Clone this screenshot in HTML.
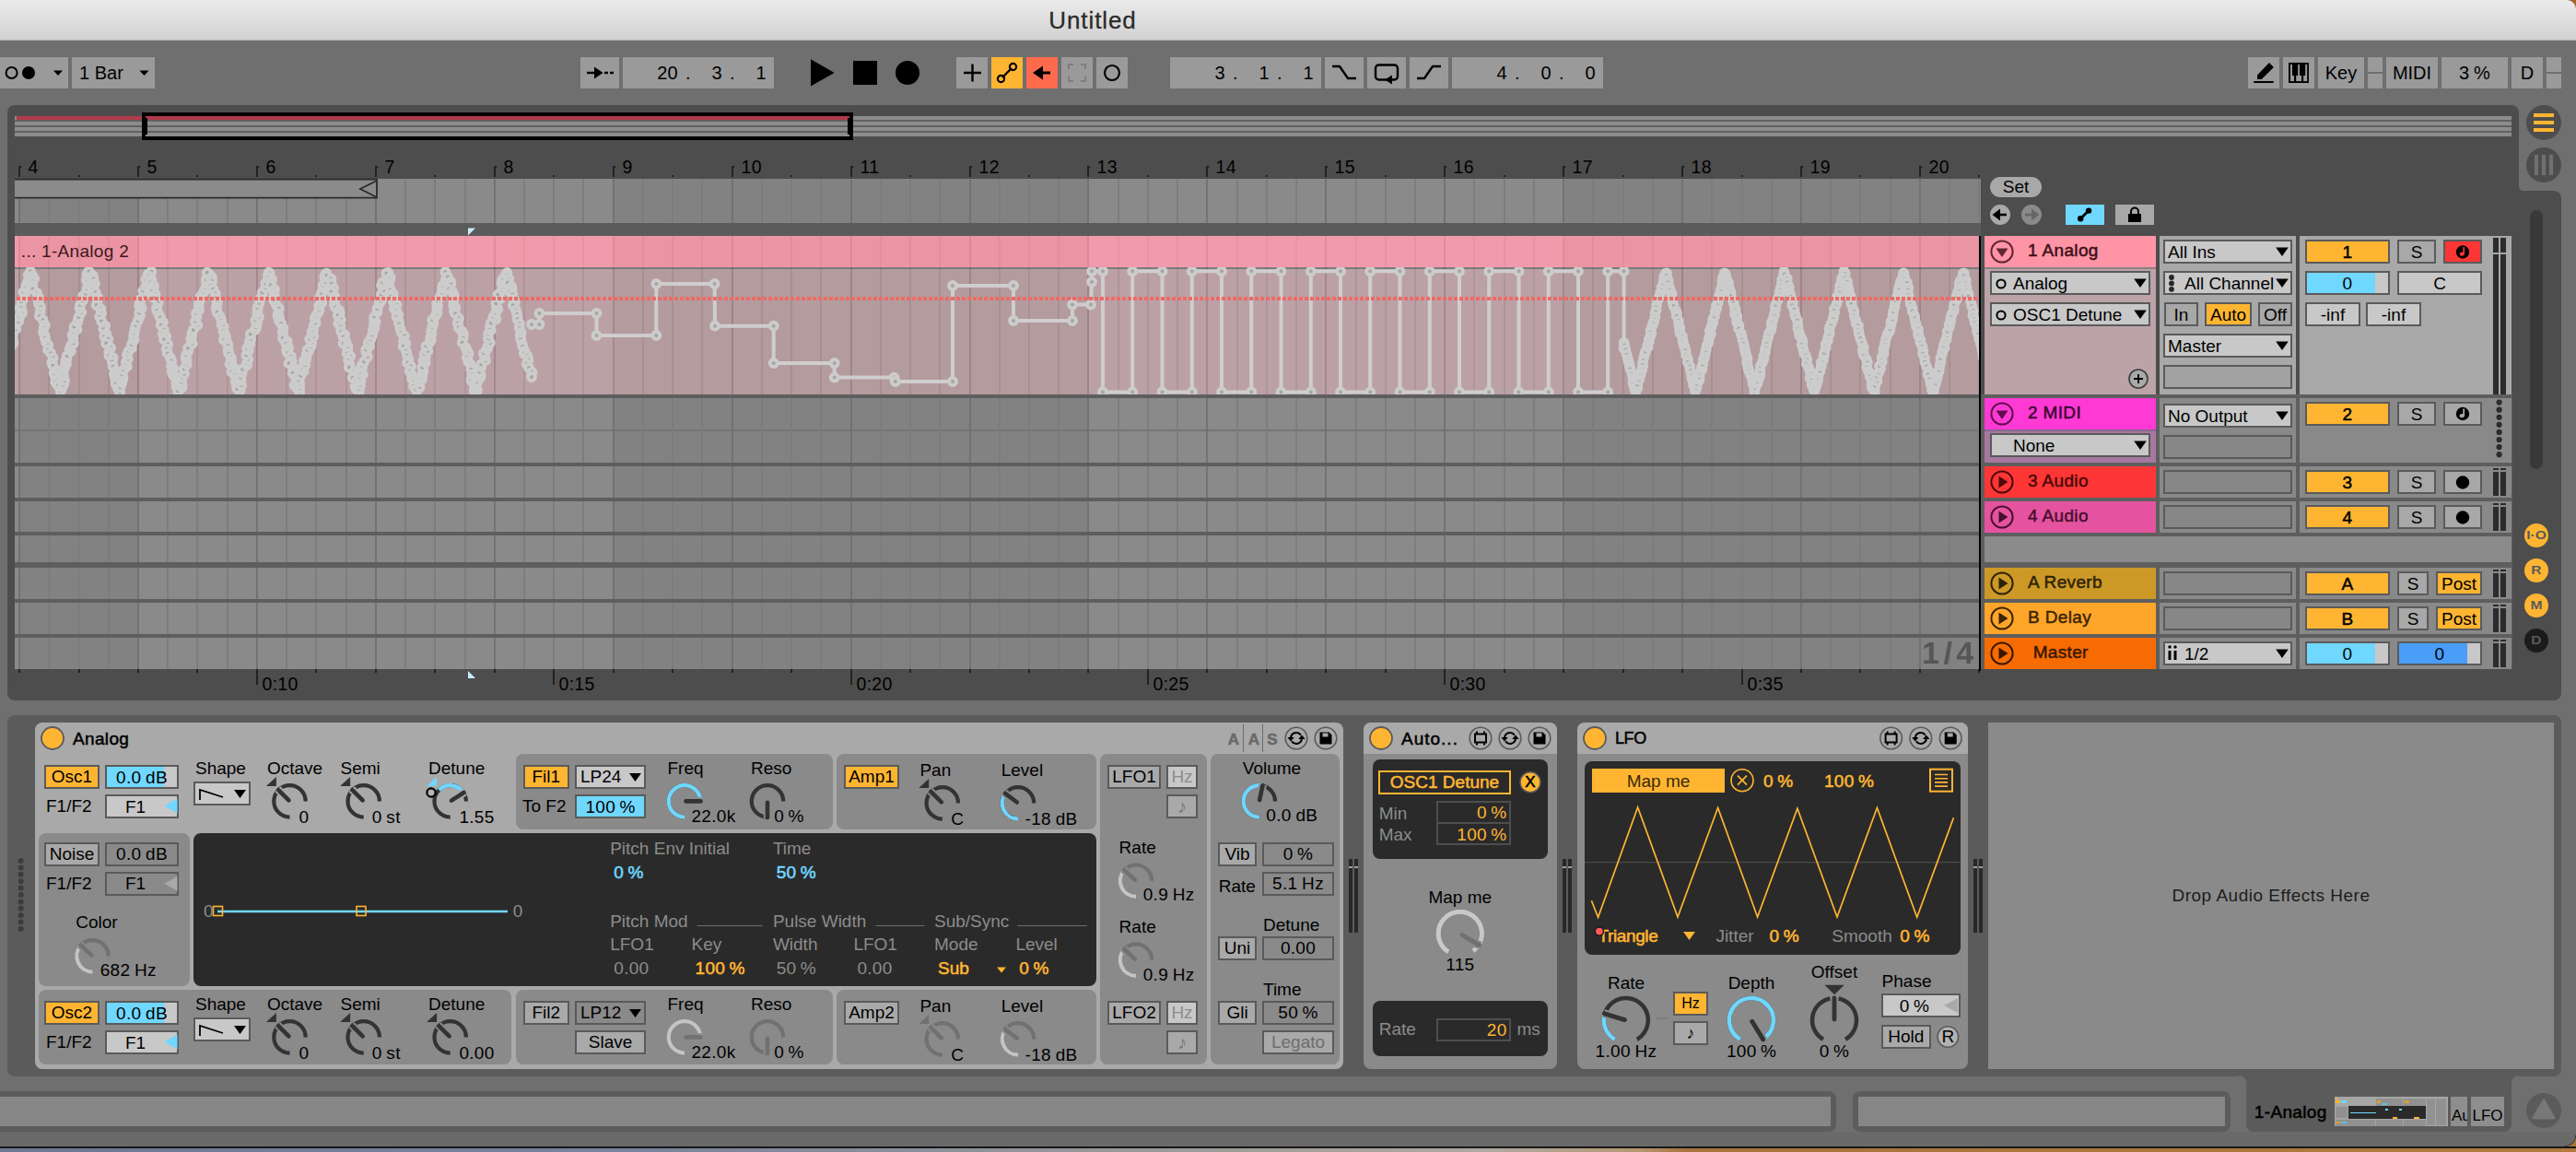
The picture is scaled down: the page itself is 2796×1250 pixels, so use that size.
<!DOCTYPE html>
<html><head><meta charset="utf-8"><title>Untitled</title>
<style>
html,body{margin:0;padding:0;}
body{width:2796px;height:1250px;overflow:hidden;background:#6f6f6f;font-family:"Liberation Sans", sans-serif;position:relative;}
.a{position:absolute;box-sizing:content-box;}
.t{white-space:nowrap;overflow:visible;}
svg{overflow:visible;pointer-events:none;}
svg text{font-family:"Liberation Sans", sans-serif;}
</style></head><body>
<div class="a" style="left:2780px;top:0px;width:16px;height:16px;background:#a1692e;"></div>
<div class="a" style="left:0px;top:0px;width:2796px;height:44px;background:linear-gradient(#ebebeb,#d1d1d1);border-bottom:1px solid #b4b4b4;height:43px;border-top-right-radius:10px;"></div>
<div class="a" style="left:0px;top:62px;width:74px;height:34px;background:#9a9a9a;"></div>
<div class="a" style="left:78px;top:62px;width:90px;height:34px;background:#9a9a9a;"></div>
<div class="a" style="left:630px;top:62px;width:42px;height:34px;background:#9a9a9a;"></div>
<div class="a" style="left:676px;top:62px;width:164px;height:34px;background:#9a9a9a;"></div>
<div class="a" style="left:1038px;top:62px;width:34px;height:34px;background:#9a9a9a;"></div>
<div class="a" style="left:1076px;top:62px;width:34px;height:34px;background:#ffb532;"></div>
<div class="a" style="left:1114px;top:62px;width:34px;height:34px;background:#ff6a4d;"></div>
<div class="a" style="left:1152px;top:62px;width:34px;height:34px;background:#9a9a9a;"></div>
<div class="a" style="left:1190px;top:62px;width:34px;height:34px;background:#9a9a9a;"></div>
<div class="a" style="left:1270px;top:62px;width:164px;height:34px;background:#9a9a9a;"></div>
<div class="a" style="left:1438px;top:62px;width:42px;height:34px;background:#9a9a9a;"></div>
<div class="a" style="left:1484px;top:62px;width:42px;height:34px;background:#9a9a9a;"></div>
<div class="a" style="left:1530px;top:62px;width:42px;height:34px;background:#9a9a9a;"></div>
<div class="a" style="left:1576px;top:62px;width:164px;height:34px;background:#9a9a9a;"></div>
<div class="a" style="left:2440px;top:62px;width:34px;height:34px;background:#9a9a9a;"></div>
<div class="a" style="left:2478px;top:62px;width:34px;height:34px;background:#9a9a9a;"></div>
<div class="a" style="left:2516px;top:62px;width:50px;height:34px;background:#9a9a9a;"></div>
<div class="a" style="left:2590px;top:62px;width:56px;height:34px;background:#9a9a9a;"></div>
<div class="a" style="left:2650px;top:62px;width:72px;height:34px;background:#9a9a9a;"></div>
<div class="a" style="left:2726px;top:62px;width:34px;height:34px;background:#9a9a9a;"></div>
<div class="a" style="left:2570px;top:62px;width:16px;height:16px;background:#9a9a9a;"></div>
<div class="a" style="left:2570px;top:80px;width:16px;height:16px;background:#9a9a9a;"></div>
<div class="a" style="left:2764px;top:62px;width:16px;height:16px;background:#9a9a9a;"></div>
<div class="a" style="left:2764px;top:80px;width:16px;height:16px;background:#9a9a9a;"></div>
<svg class="a" style="left:0;top:0" width="2796" height="1250" viewBox="0 0 2796 1250"><circle cx="12.6" cy="79" r="6" fill="none" stroke="#000" stroke-width="2"/><circle cx="31" cy="79" r="7" fill="#000"/><path d="M58 76.5h10l-5 5.5zM151.5 76.5h10l-5 5.5z" fill="#000"/><path d="M637 79h12" stroke="#000" stroke-width="2.4" fill="none"/><path d="M645 72.5l9.5 6.5l-9.5 6.5z" fill="#000"/><path d="M656 79h4M662 79h4" stroke="#000" stroke-width="2.4"/><path d="M880 64.2v29.4l25.6-14.7z" fill="#000"/><rect x="926" y="66" width="26" height="26" fill="#000"/><circle cx="985" cy="79" r="13" fill="#000"/><path d="M1046 79h19M1055.5 69.5v19" stroke="#000" stroke-width="2.4"/><path d="M1088 84l10-10" stroke="#000" stroke-width="2.4"/><circle cx="1086.5" cy="85.5" r="3.6" fill="none" stroke="#000" stroke-width="2.2"/><circle cx="1099.5" cy="72.5" r="3.6" fill="none" stroke="#000" stroke-width="2.2"/><path d="M1128 79h12" stroke="#000" stroke-width="3"/><path d="M1132 71.5v15l-11-7.5z" fill="#000"/><path d="M1160 75v-5h5M1173 70h5v5M1178 83v5h-5M1165 88h-5v-5" stroke="#7d7d7d" stroke-width="2" fill="none"/><circle cx="1207" cy="79" r="8" fill="none" stroke="#000" stroke-width="2.2"/><path d="M1446 72h8l9 13h9" stroke="#000" stroke-width="2.4" fill="none"/><path d="M1505 86.5h-8.5a3.5 3.5 0 0 1-3.5-3.5v-9a3.5 3.5 0 0 1 3.5-3.5h17a3.5 3.5 0 0 1 3.5 3.5v9a3.5 3.5 0 0 1-3.5 3.5h-3" stroke="#000" stroke-width="2.4" fill="none"/><path d="M1511 81.5v10l-8-5z" fill="#000"/><path d="M1538 85h8l9-13h9" stroke="#000" stroke-width="2.4" fill="none"/><path d="M2447 89h20" stroke="#000" stroke-width="1.9" stroke-linecap="round"/><path d="M2450 81.4v4.5h4.8l13.1-12.9l-4.9-4.9z" fill="#000"/><rect x="2484" y="68" width="22" height="22" fill="#000"/><g fill="#9a9a9a"><rect x="2486" y="70" width="2" height="12"/><rect x="2486" y="82" width="4" height="6.1"/><rect x="2494.2" y="70" width="1.8" height="12"/><rect x="2492.2" y="82" width="5.8" height="6.1"/><rect x="2502.2" y="70" width="2" height="12"/><rect x="2500.2" y="82" width="4" height="6.1"/></g></svg>
<div class="a t" style="left:1086px;top:0px;width:200px;height:44px;line-height:44px;font-size:26px;color:#2b2b2b;text-align:center;letter-spacing:0.9px;-webkit-text-stroke:0.3px;">Untitled</div>
<div class="a t" style="left:86px;top:62px;width:70px;height:34px;line-height:34px;font-size:20px;color:#000;">1 Bar</div>
<div class="a t" style="left:2516px;top:62px;width:50px;height:34px;line-height:34px;font-size:20px;color:#000;text-align:center;">Key</div>
<div class="a t" style="left:2590px;top:62px;width:56px;height:34px;line-height:34px;font-size:20px;color:#000;text-align:center;">MIDI</div>
<div class="a t" style="left:2650px;top:62px;width:72px;height:34px;line-height:34px;font-size:20px;color:#000;text-align:center;letter-spacing:0.3px;word-spacing:-1.2px;">3 %</div>
<div class="a t" style="left:2726px;top:62px;width:34px;height:34px;line-height:34px;font-size:20px;color:#000;text-align:center;">D</div>
<div class="a t" style="left:676px;top:62px;width:60px;height:34px;line-height:34px;font-size:20px;color:#000;text-align:right;letter-spacing:0.3px;">20</div>
<div class="a t" style="left:736px;top:62px;width:22px;height:34px;line-height:34px;font-size:20px;color:#000;text-align:center;letter-spacing:0.3px;">.</div>
<div class="a t" style="left:736px;top:62px;width:48px;height:34px;line-height:34px;font-size:20px;color:#000;text-align:right;letter-spacing:0.3px;">3</div>
<div class="a t" style="left:784px;top:62px;width:22px;height:34px;line-height:34px;font-size:20px;color:#000;text-align:center;letter-spacing:0.3px;">.</div>
<div class="a t" style="left:784px;top:62px;width:48px;height:34px;line-height:34px;font-size:20px;color:#000;text-align:right;letter-spacing:0.3px;">1</div>
<div class="a t" style="left:1270px;top:62px;width:60px;height:34px;line-height:34px;font-size:20px;color:#000;text-align:right;letter-spacing:0.3px;">3</div>
<div class="a t" style="left:1330px;top:62px;width:22px;height:34px;line-height:34px;font-size:20px;color:#000;text-align:center;letter-spacing:0.3px;">.</div>
<div class="a t" style="left:1330px;top:62px;width:48px;height:34px;line-height:34px;font-size:20px;color:#000;text-align:right;letter-spacing:0.3px;">1</div>
<div class="a t" style="left:1378px;top:62px;width:22px;height:34px;line-height:34px;font-size:20px;color:#000;text-align:center;letter-spacing:0.3px;">.</div>
<div class="a t" style="left:1378px;top:62px;width:48px;height:34px;line-height:34px;font-size:20px;color:#000;text-align:right;letter-spacing:0.3px;">1</div>
<div class="a t" style="left:1576px;top:62px;width:60px;height:34px;line-height:34px;font-size:20px;color:#000;text-align:right;letter-spacing:0.3px;">4</div>
<div class="a t" style="left:1636px;top:62px;width:22px;height:34px;line-height:34px;font-size:20px;color:#000;text-align:center;letter-spacing:0.3px;">.</div>
<div class="a t" style="left:1636px;top:62px;width:48px;height:34px;line-height:34px;font-size:20px;color:#000;text-align:right;letter-spacing:0.3px;">0</div>
<div class="a t" style="left:1684px;top:62px;width:22px;height:34px;line-height:34px;font-size:20px;color:#000;text-align:center;letter-spacing:0.3px;">.</div>
<div class="a t" style="left:1684px;top:62px;width:48px;height:34px;line-height:34px;font-size:20px;color:#000;text-align:right;letter-spacing:0.3px;">0</div>
<div class="a" style="left:8px;top:114px;width:2726px;height:120px;background:#4d4d4d;border-radius:8px 8px 0 0;"></div>
<div class="a" style="left:8px;top:207px;width:2772px;height:553px;background:#4d4d4d;border-radius:0 8px 8px 8px;"></div>
<div class="a" style="left:2734px;top:202px;width:5px;height:5px;background:radial-gradient(circle at 100% 0,#6f6f6f 4.5px,#4d4d4d 5.5px);"></div>
<div class="a" style="left:2742px;top:114px;width:38px;height:38px;background:#4d4d4d;border-radius:50%;"></div>
<div class="a" style="left:2742px;top:160px;width:38px;height:38px;background:#4d4d4d;border-radius:50%;"></div>
<svg class="a" style="left:0;top:0" width="2796" height="1250" viewBox="0 0 2796 1250"><path d="M2750 125h22M2750 133h22M2750 141h22" stroke="#ffb532" stroke-width="4.2"/><path d="M2753 168v22M2761 168v22M2769 168v22" stroke="#707070" stroke-width="4.2"/></svg>
<div class="a" style="left:16px;top:126px;width:2710px;height:4px;background:#8c8c8c;"></div>
<div class="a" style="left:16px;top:132px;width:2710px;height:4px;background:#8c8c8c;"></div>
<div class="a" style="left:16px;top:138px;width:2710px;height:4px;background:#8c8c8c;"></div>
<div class="a" style="left:16px;top:144px;width:2710px;height:4px;background:#8c8c8c;"></div>
<div class="a" style="left:16px;top:130px;width:2710px;height:2px;background:#616161;"></div>
<div class="a" style="left:16px;top:136px;width:2710px;height:2px;background:#616161;"></div>
<div class="a" style="left:16px;top:142px;width:2710px;height:2px;background:#616161;"></div>
<div class="a" style="left:18px;top:126px;width:904px;height:4px;background:#b13a4a;"></div>
<div class="a" style="left:154px;top:122px;width:764px;height:22px;background:transparent;border:4px solid #000;"></div>
<div class="a" style="left:158px;top:128px;width:2px;height:18px;background:#000;"></div>
<div class="a" style="left:920px;top:128px;width:2px;height:18px;background:#000;"></div>
<div class="a" style="left:16px;top:242px;width:2134px;height:14px;background:#5b5b5b;"></div>
<div class="a" style="left:16px;top:428px;width:2711px;height:298px;background:#5e5e5e;"></div>
<div class="a" style="left:16px;top:194px;width:2134px;height:48px;background:#8a8a8a;"></div>
<div class="a" style="left:21px;top:194px;width:130px;height:48px;background:#828282;"></div>
<div class="a" style="left:667px;top:194px;width:515px;height:48px;background:#828282;"></div>
<div class="a" style="left:1698px;top:194px;width:452px;height:48px;background:#828282;"></div>
<div class="a" style="left:16px;top:432px;width:2134px;height:70px;background:#8a8a8a;"></div>
<div class="a" style="left:21px;top:432px;width:130px;height:70px;background:#828282;"></div>
<div class="a" style="left:667px;top:432px;width:515px;height:70px;background:#828282;"></div>
<div class="a" style="left:1698px;top:432px;width:452px;height:70px;background:#828282;"></div>
<div class="a" style="left:16px;top:506px;width:2134px;height:34px;background:#8a8a8a;"></div>
<div class="a" style="left:21px;top:506px;width:130px;height:34px;background:#828282;"></div>
<div class="a" style="left:667px;top:506px;width:515px;height:34px;background:#828282;"></div>
<div class="a" style="left:1698px;top:506px;width:452px;height:34px;background:#828282;"></div>
<div class="a" style="left:16px;top:544px;width:2134px;height:33px;background:#8a8a8a;"></div>
<div class="a" style="left:21px;top:544px;width:130px;height:33px;background:#828282;"></div>
<div class="a" style="left:667px;top:544px;width:515px;height:33px;background:#828282;"></div>
<div class="a" style="left:1698px;top:544px;width:452px;height:33px;background:#828282;"></div>
<div class="a" style="left:16px;top:581px;width:2134px;height:29px;background:#8a8a8a;"></div>
<div class="a" style="left:21px;top:581px;width:130px;height:29px;background:#828282;"></div>
<div class="a" style="left:667px;top:581px;width:515px;height:29px;background:#828282;"></div>
<div class="a" style="left:1698px;top:581px;width:452px;height:29px;background:#828282;"></div>
<div class="a" style="left:16px;top:616px;width:2134px;height:34px;background:#8a8a8a;"></div>
<div class="a" style="left:21px;top:616px;width:130px;height:34px;background:#828282;"></div>
<div class="a" style="left:667px;top:616px;width:515px;height:34px;background:#828282;"></div>
<div class="a" style="left:1698px;top:616px;width:452px;height:34px;background:#828282;"></div>
<div class="a" style="left:16px;top:654px;width:2134px;height:34px;background:#8a8a8a;"></div>
<div class="a" style="left:21px;top:654px;width:130px;height:34px;background:#828282;"></div>
<div class="a" style="left:667px;top:654px;width:515px;height:34px;background:#828282;"></div>
<div class="a" style="left:1698px;top:654px;width:452px;height:34px;background:#828282;"></div>
<div class="a" style="left:16px;top:692px;width:2134px;height:34px;background:#8a8a8a;"></div>
<div class="a" style="left:21px;top:692px;width:130px;height:34px;background:#828282;"></div>
<div class="a" style="left:667px;top:692px;width:515px;height:34px;background:#828282;"></div>
<div class="a" style="left:1698px;top:692px;width:452px;height:34px;background:#828282;"></div>
<div class="a" style="left:16px;top:256px;width:2134px;height:34px;background:#f09aab;"></div>
<div class="a" style="left:21px;top:256px;width:130px;height:34px;background:#eb94a4;"></div>
<div class="a" style="left:667px;top:256px;width:515px;height:34px;background:#eb94a4;"></div>
<div class="a" style="left:1698px;top:256px;width:452px;height:34px;background:#eb94a4;"></div>
<div class="a" style="left:16px;top:290px;width:2134px;height:138px;background:#bba1a5;"></div>
<div class="a" style="left:21px;top:290px;width:130px;height:138px;background:#b39b9e;"></div>
<div class="a" style="left:667px;top:290px;width:515px;height:138px;background:#b39b9e;"></div>
<div class="a" style="left:1698px;top:290px;width:452px;height:138px;background:#b39b9e;"></div>
<div class="a" style="left:16px;top:290px;width:2134px;height:2px;background:#7a7c7c;"></div>
<div class="a" style="left:16px;top:466px;width:2134px;height:1.6px;background:#757575;"></div>
<svg class="a" style="left:0;top:0" width="2796" height="1250" viewBox="0 0 2796 1250"><path d="M21 194V242M150 194V242M279 194V242M408 194V242M537 194V242M666 194V242M795 194V242M924 194V242M1053 194V242M1181 194V242M1310 194V242M1439 194V242M1568 194V242M1697 194V242M1826 194V242M1955 194V242M2084 194V242" stroke="#707070" stroke-width="1.8"/><path d="M53 194V242M86 194V242M118 194V242M182 194V242M214 194V242M247 194V242M311 194V242M343 194V242M376 194V242M440 194V242M472 194V242M505 194V242M569 194V242M601 194V242M633 194V242M698 194V242M730 194V242M762 194V242M827 194V242M859 194V242M891 194V242M956 194V242M988 194V242M1020 194V242M1085 194V242M1117 194V242M1149 194V242M1214 194V242M1246 194V242M1278 194V242M1343 194V242M1375 194V242M1407 194V242M1472 194V242M1504 194V242M1536 194V242M1600 194V242M1633 194V242M1665 194V242M1729 194V242M1762 194V242M1794 194V242M1858 194V242M1891 194V242M1923 194V242M1987 194V242M2019 194V242M2052 194V242M2116 194V242M2148 194V242" stroke="#7c7c7c" stroke-width="1.8"/><path d="M21 256V290M150 256V290M279 256V290M408 256V290M537 256V290M666 256V290M795 256V290M924 256V290M1053 256V290M1181 256V290M1310 256V290M1439 256V290M1568 256V290M1697 256V290M1826 256V290M1955 256V290M2084 256V290" stroke="rgba(90,30,45,.10)" stroke-width="2"/><path d="M53 256V290M86 256V290M118 256V290M182 256V290M214 256V290M247 256V290M311 256V290M343 256V290M376 256V290M440 256V290M472 256V290M505 256V290M569 256V290M601 256V290M633 256V290M698 256V290M730 256V290M762 256V290M827 256V290M859 256V290M891 256V290M956 256V290M988 256V290M1020 256V290M1085 256V290M1117 256V290M1149 256V290M1214 256V290M1246 256V290M1278 256V290M1343 256V290M1375 256V290M1407 256V290M1472 256V290M1504 256V290M1536 256V290M1600 256V290M1633 256V290M1665 256V290M1729 256V290M1762 256V290M1794 256V290M1858 256V290M1891 256V290M1923 256V290M1987 256V290M2019 256V290M2052 256V290M2116 256V290M2148 256V290" stroke="rgba(90,30,45,.05)" stroke-width="2"/><path d="M21 290V428M150 290V428M279 290V428M408 290V428M537 290V428M666 290V428M795 290V428M924 290V428M1053 290V428M1181 290V428M1310 290V428M1439 290V428M1568 290V428M1697 290V428M1826 290V428M1955 290V428M2084 290V428" stroke="rgba(60,20,30,.17)" stroke-width="2"/><path d="M53 290V428M86 290V428M118 290V428M182 290V428M214 290V428M247 290V428M311 290V428M343 290V428M376 290V428M440 290V428M472 290V428M505 290V428M569 290V428M601 290V428M633 290V428M698 290V428M730 290V428M762 290V428M827 290V428M859 290V428M891 290V428M956 290V428M988 290V428M1020 290V428M1085 290V428M1117 290V428M1149 290V428M1214 290V428M1246 290V428M1278 290V428M1343 290V428M1375 290V428M1407 290V428M1472 290V428M1504 290V428M1536 290V428M1600 290V428M1633 290V428M1665 290V428M1729 290V428M1762 290V428M1794 290V428M1858 290V428M1891 290V428M1923 290V428M1987 290V428M2019 290V428M2052 290V428M2116 290V428M2148 290V428" stroke="rgba(60,20,30,.09)" stroke-width="2"/><path d="M21 432V502M150 432V502M279 432V502M408 432V502M537 432V502M666 432V502M795 432V502M924 432V502M1053 432V502M1181 432V502M1310 432V502M1439 432V502M1568 432V502M1697 432V502M1826 432V502M1955 432V502M2084 432V502" stroke="#707070" stroke-width="1.8"/><path d="M53 432V502M86 432V502M118 432V502M182 432V502M214 432V502M247 432V502M311 432V502M343 432V502M376 432V502M440 432V502M472 432V502M505 432V502M569 432V502M601 432V502M633 432V502M698 432V502M730 432V502M762 432V502M827 432V502M859 432V502M891 432V502M956 432V502M988 432V502M1020 432V502M1085 432V502M1117 432V502M1149 432V502M1214 432V502M1246 432V502M1278 432V502M1343 432V502M1375 432V502M1407 432V502M1472 432V502M1504 432V502M1536 432V502M1600 432V502M1633 432V502M1665 432V502M1729 432V502M1762 432V502M1794 432V502M1858 432V502M1891 432V502M1923 432V502M1987 432V502M2019 432V502M2052 432V502M2116 432V502M2148 432V502" stroke="#7c7c7c" stroke-width="1.8"/><path d="M21 506V540M150 506V540M279 506V540M408 506V540M537 506V540M666 506V540M795 506V540M924 506V540M1053 506V540M1181 506V540M1310 506V540M1439 506V540M1568 506V540M1697 506V540M1826 506V540M1955 506V540M2084 506V540" stroke="#707070" stroke-width="1.8"/><path d="M53 506V540M86 506V540M118 506V540M182 506V540M214 506V540M247 506V540M311 506V540M343 506V540M376 506V540M440 506V540M472 506V540M505 506V540M569 506V540M601 506V540M633 506V540M698 506V540M730 506V540M762 506V540M827 506V540M859 506V540M891 506V540M956 506V540M988 506V540M1020 506V540M1085 506V540M1117 506V540M1149 506V540M1214 506V540M1246 506V540M1278 506V540M1343 506V540M1375 506V540M1407 506V540M1472 506V540M1504 506V540M1536 506V540M1600 506V540M1633 506V540M1665 506V540M1729 506V540M1762 506V540M1794 506V540M1858 506V540M1891 506V540M1923 506V540M1987 506V540M2019 506V540M2052 506V540M2116 506V540M2148 506V540" stroke="#7c7c7c" stroke-width="1.8"/><path d="M21 544V577M150 544V577M279 544V577M408 544V577M537 544V577M666 544V577M795 544V577M924 544V577M1053 544V577M1181 544V577M1310 544V577M1439 544V577M1568 544V577M1697 544V577M1826 544V577M1955 544V577M2084 544V577" stroke="#707070" stroke-width="1.8"/><path d="M53 544V577M86 544V577M118 544V577M182 544V577M214 544V577M247 544V577M311 544V577M343 544V577M376 544V577M440 544V577M472 544V577M505 544V577M569 544V577M601 544V577M633 544V577M698 544V577M730 544V577M762 544V577M827 544V577M859 544V577M891 544V577M956 544V577M988 544V577M1020 544V577M1085 544V577M1117 544V577M1149 544V577M1214 544V577M1246 544V577M1278 544V577M1343 544V577M1375 544V577M1407 544V577M1472 544V577M1504 544V577M1536 544V577M1600 544V577M1633 544V577M1665 544V577M1729 544V577M1762 544V577M1794 544V577M1858 544V577M1891 544V577M1923 544V577M1987 544V577M2019 544V577M2052 544V577M2116 544V577M2148 544V577" stroke="#7c7c7c" stroke-width="1.8"/><path d="M21 581V610M150 581V610M279 581V610M408 581V610M537 581V610M666 581V610M795 581V610M924 581V610M1053 581V610M1181 581V610M1310 581V610M1439 581V610M1568 581V610M1697 581V610M1826 581V610M1955 581V610M2084 581V610" stroke="#707070" stroke-width="1.8"/><path d="M53 581V610M86 581V610M118 581V610M182 581V610M214 581V610M247 581V610M311 581V610M343 581V610M376 581V610M440 581V610M472 581V610M505 581V610M569 581V610M601 581V610M633 581V610M698 581V610M730 581V610M762 581V610M827 581V610M859 581V610M891 581V610M956 581V610M988 581V610M1020 581V610M1085 581V610M1117 581V610M1149 581V610M1214 581V610M1246 581V610M1278 581V610M1343 581V610M1375 581V610M1407 581V610M1472 581V610M1504 581V610M1536 581V610M1600 581V610M1633 581V610M1665 581V610M1729 581V610M1762 581V610M1794 581V610M1858 581V610M1891 581V610M1923 581V610M1987 581V610M2019 581V610M2052 581V610M2116 581V610M2148 581V610" stroke="#7c7c7c" stroke-width="1.8"/><path d="M21 616V650M150 616V650M279 616V650M408 616V650M537 616V650M666 616V650M795 616V650M924 616V650M1053 616V650M1181 616V650M1310 616V650M1439 616V650M1568 616V650M1697 616V650M1826 616V650M1955 616V650M2084 616V650" stroke="#707070" stroke-width="1.8"/><path d="M53 616V650M86 616V650M118 616V650M182 616V650M214 616V650M247 616V650M311 616V650M343 616V650M376 616V650M440 616V650M472 616V650M505 616V650M569 616V650M601 616V650M633 616V650M698 616V650M730 616V650M762 616V650M827 616V650M859 616V650M891 616V650M956 616V650M988 616V650M1020 616V650M1085 616V650M1117 616V650M1149 616V650M1214 616V650M1246 616V650M1278 616V650M1343 616V650M1375 616V650M1407 616V650M1472 616V650M1504 616V650M1536 616V650M1600 616V650M1633 616V650M1665 616V650M1729 616V650M1762 616V650M1794 616V650M1858 616V650M1891 616V650M1923 616V650M1987 616V650M2019 616V650M2052 616V650M2116 616V650M2148 616V650" stroke="#7c7c7c" stroke-width="1.8"/><path d="M21 654V688M150 654V688M279 654V688M408 654V688M537 654V688M666 654V688M795 654V688M924 654V688M1053 654V688M1181 654V688M1310 654V688M1439 654V688M1568 654V688M1697 654V688M1826 654V688M1955 654V688M2084 654V688" stroke="#707070" stroke-width="1.8"/><path d="M53 654V688M86 654V688M118 654V688M182 654V688M214 654V688M247 654V688M311 654V688M343 654V688M376 654V688M440 654V688M472 654V688M505 654V688M569 654V688M601 654V688M633 654V688M698 654V688M730 654V688M762 654V688M827 654V688M859 654V688M891 654V688M956 654V688M988 654V688M1020 654V688M1085 654V688M1117 654V688M1149 654V688M1214 654V688M1246 654V688M1278 654V688M1343 654V688M1375 654V688M1407 654V688M1472 654V688M1504 654V688M1536 654V688M1600 654V688M1633 654V688M1665 654V688M1729 654V688M1762 654V688M1794 654V688M1858 654V688M1891 654V688M1923 654V688M1987 654V688M2019 654V688M2052 654V688M2116 654V688M2148 654V688" stroke="#7c7c7c" stroke-width="1.8"/><path d="M21 692V726M150 692V726M279 692V726M408 692V726M537 692V726M666 692V726M795 692V726M924 692V726M1053 692V726M1181 692V726M1310 692V726M1439 692V726M1568 692V726M1697 692V726M1826 692V726M1955 692V726M2084 692V726" stroke="#707070" stroke-width="1.8"/><path d="M53 692V726M86 692V726M118 692V726M182 692V726M214 692V726M247 692V726M311 692V726M343 692V726M376 692V726M440 692V726M472 692V726M505 692V726M569 692V726M601 692V726M633 692V726M698 692V726M730 692V726M762 692V726M827 692V726M859 692V726M891 692V726M956 692V726M988 692V726M1020 692V726M1085 692V726M1117 692V726M1149 692V726M1214 692V726M1246 692V726M1278 692V726M1343 692V726M1375 692V726M1407 692V726M1472 692V726M1504 692V726M1536 692V726M1600 692V726M1633 692V726M1665 692V726M1729 692V726M1762 692V726M1794 692V726M1858 692V726M1891 692V726M1923 692V726M1987 692V726M2019 692V726M2052 692V726M2116 692V726M2148 692V726" stroke="#7c7c7c" stroke-width="1.8"/><path d="M21 192V181h2.2M150 192V181h2.2M279 192V181h2.2M408 192V181h2.2M537 192V181h2.2M666 192V181h2.2M795 192V181h2.2M924 192V181h2.2M1053 192V181h2.2M1181 192V181h2.2M1310 192V181h2.2M1439 192V181h2.2M1568 192V181h2.2M1697 192V181h2.2M1826 192V181h2.2M1955 192V181h2.2M2084 192V181h2.2" stroke="#222" stroke-width="2" fill="none"/><path d="M86 190V192M214 190V192M343 190V192M472 190V192M601 190V192M730 190V192M859 190V192M988 190V192M1117 190V192M1246 190V192M1375 190V192M1504 190V192M1633 190V192M1762 190V192M1891 190V192M2019 190V192M2148 190V192" stroke="#222" stroke-width="2"/><path d="M21 726V730M86 726V730M150 726V730M214 726V730M343 726V730M408 726V730M472 726V730M537 726V730M666 726V730M730 726V730M795 726V730M859 726V730M988 726V730M1053 726V730M1117 726V730M1181 726V730M1310 726V730M1375 726V730M1439 726V730M1504 726V730M1633 726V730M1697 726V730M1762 726V730M1826 726V730M1955 726V730M2019 726V730M2084 726V730M2148 726V730" stroke="#222" stroke-width="2"/><path d="M279 726V743M601 726V743M924 726V743M1246 726V743M1568 726V743M1891 726V743" stroke="#222" stroke-width="2"/><path d="M16 194.7H409V214.7H16" fill="#8b8b8b" stroke="#2b2b2b" stroke-width="1.8"/><path d="M408 196.5L391 205L408 213.5" fill="none" stroke="#2b2b2b" stroke-width="1.8"/><path d="M508 247.5h8l-8 8z" fill="#c8ecff"/><path d="M508 728v8h8z" fill="#c8ecff"/></svg>
<svg class="a" style="left:0;top:0" width="2796" height="1250" viewBox="0 0 2796 1250"><defs><marker id="m" markerWidth="14" markerHeight="14" refX="7" refY="7" markerUnits="userSpaceOnUse"><circle cx="7" cy="7" r="3.95" fill="#a6a4a5" stroke="#cdcccc" stroke-width="3.9"/></marker><clipPath id="lc"><rect x="16" y="290" width="2134" height="138"/></clipPath></defs><g clip-path="url(#lc)" fill="none" stroke="#cfcdce" stroke-width="4" stroke-linejoin="round"><polyline points="12.2,375.7 14.4,372.9 14.5,370.3 13.1,366.9 14,363 15,359.4 17.3,356.8 17.1,351.9 20.2,348.9 21.2,343.7 23.9,340.1 24,337.7 21.5,334.4 22.9,331.8 23.5,326.9 26.6,322.8 27.1,319.4 25.4,316.8 29,313.9 28.2,310.3 29.9,306.1 32.2,302.9 30.8,298.4 33.1,294.3 35.3,299.3 37.2,302.5 35.3,305.2 35.2,309.8 35.6,313.6 40,318 41.6,322.1 41.5,325.4 42,329.5 44.1,333.3 43.7,338.5 42.9,342.9 46.7,347.3 48.8,352.7 47.6,355.9 47,360.3 48.6,364 48.8,366.7 50.2,371.4 52.2,374.5 52,379.5 55.1,383.2 57.6,388.2 56.3,393.2 57.5,396.8 61.5,401.9 58.6,404.6 59.6,407.7 62.2,411.5 60.3,414.6 62.9,418.2 66.5,422.3 65.6,424.3 67.4,420.1 69,417.6 70.1,412.9 69,408.1 68.6,404.5 69.4,400.3 70.7,397.7 72,394.9 71.1,392.4 72.2,389.7 72.7,386.2 76.7,381.2 75.7,378.4 77,375 79.9,372.3 79.5,367 78.7,363.2 80.5,360.5 83.5,357.4 80.5,354.6 84.1,349.3 84.9,346.6 85.4,344.2 88.2,338.8 86.6,334.4 87,330.9 89.8,326.2 90,321.5 93,318.5 94.5,313.1 95.5,308.3 93.9,303.7 95.5,299.8 94.6,297.4 96.4,294.4 100.7,298.8 101.5,302.5 102.9,307.9 100.4,311.3 101,314.3 103.7,317.3 106,322.4 106,326.2 104.6,331 109.5,335.3 109.9,340 108.2,343.8 110.1,348.6 114.2,353.4 112.4,356.9 115.2,362.1 113.2,365 117.4,367.8 115.1,372.6 120.1,377.4 118.3,381.8 118.3,385.8 122.7,388.2 121.8,392.5 122.6,397.7 125.6,402.7 123.7,405.6 124.5,408.9 125.6,413 125.9,416.6 128.1,421.7 130.1,425.5 130.6,420.4 132.3,415.3 133.3,411.3 133.5,409 132.2,406.1 134.2,401.3 137.7,397.5 136.8,393.5 138.8,389.6 137.9,384.8 139.6,380.8 142.8,377.6 142.8,373.7 145.5,369.1 145,365.4 145.5,361.5 146.4,357.1 147.4,353.1 149.7,347.9 152.1,342.9 151.1,339.7 153.7,334.5 151,331.8 151.7,328.1 152.5,325 156.8,320.7 155.2,315.6 158.6,311 160.3,308.3 158.6,303 160.7,297.7 164.3,294.7 161.7,299.6 164.3,303.2 163.6,306.6 166.9,309.9 166.7,312.3 165.1,315.9 168.7,319.3 167.1,323.2 171.7,328.5 169.9,333.8 170.4,337 172.6,341.7 174,344.4 177,349.5 174.7,352.7 177.9,357.8 176.8,362.3 180.2,364.8 178.2,368.4 182.1,373.6 180.8,378.4 181.9,383.4 184.9,388.3 186.2,391.7 186.1,396.9 188,399.6 186.8,402.6 187.3,405.5 189.2,408.4 192,411.7 191.6,414.9 191.6,417.7 191.8,420.1 194.6,422.5 193.1,424.5 197.4,420.7 197.5,418.1 196.9,414.4 197.7,409.6 200,405.7 199.7,400.3 202.6,395.4 202.3,391.2 201.5,387.8 202.2,385.1 204.2,380.5 204.1,377.6 208.9,372.7 207.3,368.3 208.1,365.3 208.4,361.5 209.8,357.9 214.4,352.6 212,348.6 213.6,343.3 213,339.9 216,336.4 215.7,332.5 215.8,328.6 216.9,325.5 217.6,321.9 219.4,319.6 221.4,316.5 223.2,312.6 224.1,308.2 223.8,303.2 227.4,299.9 226.8,297.1 224.8,295.8 229.9,300.7 230.2,304.9 228.6,309.8 231.3,313.7 233.9,318.6 234.1,323.5 235.8,328.5 234.8,333 234.9,335.4 235.6,338.8 238.9,343.7 240.3,348 240.7,352.4 242.7,354.7 242.5,359.3 244.2,363.3 245.2,365.8 242.9,368.9 246.7,372.1 247.4,375 247.6,380.3 248.4,383.8 250.8,388.3 251.3,392.5 249.6,395 253.1,398.1 253.1,401.4 251.4,403.7 255,406.9 256.1,411.3 256.1,414.6 256.8,418.3 259.5,421 260.6,423.9 257.4,421.9 262,418.1 261.6,412.8 261.3,409.7 262.6,404.5 263.3,400.4 268,396.4 268,393.7 269.3,389.8 267.4,385.3 269.8,380.2 268.2,377.8 271.2,374 270.6,370.8 272.2,367.4 271.9,362.5 276.9,357.8 278,355.2 279,350.6 277.4,347.4 281.1,343.9 279.2,339.8 279.7,336.1 279.5,333.7 281.5,328.8 282.7,323.6 284.6,320.4 284.7,317.5 288.4,312.3 288.4,307.4 291.1,302.3 291,298.3 291.7,295.8 292.7,296.5 291.6,300.8 295.2,303.2 293.7,306 293.8,309.3 298,313.9 297.3,317 297.7,320.3 296.7,323.8 297.6,326.6 300.2,331.7 302.8,334.7 302,340.1 301.5,342.9 302.9,345.5 303,348.1 305.3,351.2 307.4,356.2 306.7,359.8 307.5,363.8 306.9,367.1 311.8,370.3 310.4,373 313.1,377.3 311.1,380.2 312.4,383.3 315.9,387 316.7,391.9 313.4,394.3 318.5,398.8 318,402.6 317.7,404.9 321,410.1 322.9,415.1 319.6,418.1 322.2,420.9 325.2,425.4 325,421.1 325.3,416.4 324.4,412.4 326.4,407.7 329.6,402.5 328,399.3 331.1,396.2 329.8,391.7 332.3,389.2 332.7,385.1 334.4,382.1 333.6,379.7 337.5,376 338.2,371.7 336.2,367.9 340.3,364.8 338.4,360.3 339.9,357.9 340.6,353.5 342.5,350.4 341.7,345.3 342.8,342.8 345.3,339.2 346.5,336.3 346.3,331.7 349.2,328.7 349.3,325.5 347.3,322.4 348.8,317.8 351,312.5 350.5,309.6 353.4,306 352.3,300.8 353.5,297.3 354.4,296.7 354.7,299.1 359.4,302.7 359.9,307.7 362.1,313.1 359.5,316.4 363.4,321.7 363.6,324.1 363.1,327.5 363,330.9 364.1,333.2 368,336.6 368.7,339.3 366.6,342.3 370,347.1 367.3,350.8 369.7,354.5 370.2,359.7 374.2,363.1 372.6,365.5 375.4,370.4 372.7,372.8 377.3,375.3 377.3,378.4 376.7,383.5 380.3,386.7 378.1,390.9 379.5,395.4 378.9,398.6 384.2,403.2 385.4,407.5 382.7,409.9 386.9,413.7 385.6,418.9 386.6,422 389.8,425.1 389.9,422.3 391.2,417.7 391.3,413 390.8,409.6 393.8,406.2 391.7,403.6 393.1,399 392.7,396.5 395.1,392.5 398.9,387.1 397.4,381.8 397.3,379.2 401,375.3 399.8,371.6 402.4,368 404.1,363.6 404.9,358.7 406.4,356 405.9,352.8 407.6,349.3 406,346.4 406.4,343.3 409.5,338.3 409.5,335 411.4,329.6 413.5,326.5 415.4,322.2 413.7,319.6 416.5,314.7 414.1,309.6 415.3,306.4 419.9,303.5 420.7,299.4 421.3,295.9 419.4,296.4 423.7,301.1 422.8,303.8 422.1,308 422.6,311.4 423.8,314.4 426.7,318.6 424.4,321.5 428.3,324.8 427.3,327.7 430.3,330.7 427.9,334.7 430.1,337.3 432.2,341.3 430.6,343.9 432.9,348.4 433.2,351.6 434.5,356.8 435.7,360.9 438.9,364.5 437.9,369.9 440.3,372.8 437.7,375.7 440.9,380.8 442,385.7 443.5,390.7 442.2,393.5 446,397.6 444.7,402.7 447.1,406.9 447,410.8 449.5,414 448.9,419.1 453,423 451.5,422.7 455.6,420 454.8,414.7 457.5,412.2 458.2,408.7 458.9,404.5 459.4,401.7 458.4,398.7 461.6,393.7 459.5,390.8 461.7,387.3 460.8,383.8 464.3,380.7 462.4,375.6 466.7,371.6 467.7,369.1 467.2,366.5 468.3,362.5 468.2,359.2 469.2,355.1 470.4,350.7 469.3,347.1 472.5,342.8 474.5,339.8 474.3,335.1 475.1,332.2 474.1,329.6 474.9,325.9 477.7,322.2 478.9,319.8 479.9,317.2 480.1,312.5 480.7,310 483.6,306.5 483.8,303.8 484.6,298.4 483.3,295 486,300.4 489.2,305.6 489.3,308.5 487.3,313.6 491.3,317 492.6,319.8 493,323 492.2,325.8 492.2,330.9 494.3,334 493,337.4 494.2,340.2 497.9,345.4 496.8,350.5 497.7,355.3 501.1,359.2 503,362.6 502.7,366.7 501.7,371.7 505.4,377.1 507.1,380.6 508.7,383.7 506.9,387.8 508.4,392.5 510.5,395.4 511.4,397.8 511.4,400.9 512.4,406.3 512.2,410.7 511.5,413 514.9,415.8 515.3,419.4 514.8,424.5 517.9,423.5 515.5,421.1 516.9,417.7 518.2,414.3 520.9,410.2 521.8,407.2 520.5,403.4 522.3,398.2 522.3,395.5 526.9,391.2 525.9,386.4 524.9,383.3 528.5,379 529.7,375.6 531.9,371.9 529.9,367.3 530.2,362.2 532.8,358.3 532,355.2 532.9,350.5 538.2,346.5 535.5,343.7 537.9,339.6 540.4,335.3 538.8,332.4 538.4,329.2 543,324.1 540.5,319.6 545.1,314.7 546,310.9 544.6,307.2 545.2,304.5 546.3,302.1 549.1,297.5 550.4,296 550.4,299.2 552.4,302.8 551,306.8 555.3,311.1 555.6,314.1 553.3,316.4 556.3,319.5 557.6,324.7 559,328 556.9,331.3 560,336.5 561.2,340.9 561.6,346.3 563.9,351.2 563.9,356.1 565.6,360.7 564.8,363.9 565.2,368.2 566.8,373.3 567.2,375.7 569.6,380.9 568.8,383.6 572.4,386.1 573.5,390.4 571.7,394.9 574.1,399.1 577.4,403.9 577,409" marker-start="url(#m)" marker-mid="url(#m)" marker-end="url(#m)"/><polyline points="577,352 585.4,352 585.4,340 647.5,340 647.5,364 712.3,364 712.3,308 775.6,308 776,353.7 839.7,353.7 839.7,394 905.7,394 905.7,409.6 970.5,409.6 971.8,414 1034,414 1034,310 1100,310 1100,348 1164,348 1164,330.5 1184,330.5 1185,306 1185,294.3 1197,294.3 1197,425.5 1229.2,425.5 1229.2,294.3 1261.5,294.3 1261.5,425.5 1293.8,425.5 1293.8,294.3 1326,294.3 1326,425.5 1358.2,425.5 1358.2,294.3 1390.5,294.3 1390.5,425.5 1422.8,425.5 1422.8,294.3 1455,294.3 1455,425.5 1487.2,425.5 1487.2,294.3 1519.5,294.3 1519.5,425.5 1551.8,425.5 1551.8,294.3 1584,294.3 1584,425.5 1616.2,425.5 1616.2,294.3 1648.5,294.3 1648.5,425.5 1680.8,425.5 1680.8,294.3 1713,294.3 1713,425.5 1745.2,425.5 1745.2,294.3 1762.6,294.3 1762.6,378" marker-start="url(#m)" marker-mid="url(#m)" marker-end="url(#m)"/><polyline points="1762.6,372 1763.2,374.5 1764.4,379.5 1765.7,384.7 1767,389.9 1767.6,392.5 1768.4,395.5 1769,398.1 1769.6,400.6 1771.5,405.5 1772.5,409.8 1772.5,414 1772.8,416.7 1774.1,421.3 1775.4,424.6 1775.6,424 1777.3,420.8 1777.4,417.4 1779.1,412.1 1780.5,407.1 1780.7,404.7 1782.3,401.1 1783,397.7 1783,393.7 1784,388.7 1785.3,383.9 1786,381.6 1788.7,376.9 1788.3,374.6 1789.8,370.7 1789.9,367.8 1791.4,364.5 1792.4,361.3 1791.7,358.1 1793.4,353.7 1794.3,351 1795.3,348.5 1796.4,344 1796.5,339.7 1797.5,336.2 1798.1,331.1 1799.2,326.1 1800.4,323.1 1802.2,318 1803.8,314.5 1803.7,311.5 1805.3,307.5 1806.2,302.9 1806.4,299.5 1808.1,296.7 1809,296.3 1809.1,299.1 1810.5,303.8 1810.9,306.5 1811.7,311.6 1812.6,314.5 1814.7,318.9 1814.1,321.7 1815.2,324.8 1815.8,328.7 1816.7,332.1 1819.1,337.4 1820.2,340 1819.7,342.7 1821.8,348 1822.2,352.6 1823.3,355.5 1823.1,358.2 1823.6,361.7 1826,365.2 1826.5,369.7 1827.5,373.9 1828.5,376.7 1829.6,380.3 1830.2,385.4 1831.9,389.5 1831.7,393.1 1834.2,397.6 1835,402.3 1836.1,407.3 1836.7,411.6 1837.9,414.9 1838.1,417.5 1839.9,422.2 1840,424.5 1841.3,420.9 1842.2,416.7 1844.4,412.3 1844.5,409.4 1845.1,404.7 1847.3,400.9 1847,398.4 1848.2,395.6 1848.9,390.4 1849.7,387.8 1850.9,383.8 1851.7,379.9 1852.7,375 1854.4,371.4 1854.6,368.5 1855.7,364.9 1856.8,362.2 1855.8,358.8 1857.2,355.7 1857.8,353.3 1859.3,349.7 1859.2,346.3 1860.9,343.3 1861.8,338.1 1863.1,335.1 1862.8,331.6 1864.6,328.8 1865.5,324 1866.2,320.3 1867.8,317.3 1868,313.8 1869.5,309 1869.4,305.2 1870,301.2 1871.7,296.3 1872.7,297.2 1873.6,300.7 1874.3,304.3 1876,306.6 1875.8,309.8 1877.1,313.1 1878.3,316.7 1878.8,321 1881.1,326.2 1881.6,328.7 1882.8,333.8 1883.6,336.6 1883,340.8 1885.4,343.2 1885.1,347.5 1885.5,350.2 1887.5,353.2 1887.1,356.6 1889.7,361.7 1890.5,364.5 1891.4,368.7 1892.7,373.1 1893.7,377.9 1894.1,380.8 1895.2,384.7 1896.4,388.4 1896.1,392.4 1896.6,395.5 1897.4,399.3 1898.5,403.1 1900.2,406.9 1901.9,410.9 1902.4,413.2 1902.8,417 1904.4,421.3 1904.4,424.8 1905,420.9 1907.2,416.6 1907.7,414.2 1909.5,409.8 1910.4,406.5 1910.4,402.6 1910.7,397.5 1913,393 1914.3,389.6 1914.4,386.1 1915.9,382.2 1916,379.2 1917.1,375.6 1917.8,370.8 1919.2,365.9 1919.9,362 1922.3,358.1 1923,353.8 1922.8,350.5 1924.2,347.2 1925.6,343 1926.1,340.5 1927,335.5 1927.1,333 1927.4,330.7 1929.5,325.5 1931,321.2 1931.9,316 1932.9,311.8 1934,307.3 1934.3,302.9 1935.9,298.6 1936.3,294.7 1936.9,297.6 1939.8,302.3 1939.8,306.6 1941.8,311.5 1941.7,315.5 1942.9,318.8 1943.7,322.1 1945.8,326.4 1945.6,328.9 1945.3,331.3 1947.4,336.1 1948.4,341.3 1948.9,343.6 1951,347.8 1951.4,353.1 1951.5,356.7 1952.8,361 1953.1,363.8 1955,366.1 1956.2,368.8 1956.7,371.4 1955.7,374.1 1957.2,378.7 1958.2,383.2 1960,385.7 1961.3,390.2 1960.9,394.8 1963.2,399 1964.5,402.8 1965.4,405.9 1964.6,410.4 1966.4,412.8 1966.5,417.6 1968.6,420.9 1969.5,423.7 1968.9,423.5 1970.7,420 1971.9,416.4 1972.8,413.6 1973.3,410.2 1973.9,405.9 1975.5,402.4 1976.8,397.2 1976.8,393.1 1978.8,390.6 1979.6,386.1 1980,382.8 1981.7,377.4 1981.7,373.3 1983.8,369.6 1984.2,366.1 1985.7,362 1985.6,357.2 1986.1,354.8 1987.7,351.2 1989.5,346.4 1990,343.9 1991.2,339.1 1991,335 1993.3,330.1 1994.6,325.7 1993.8,322.3 1996.2,318.3 1996.8,315.3 1997.1,310.1 1999,305.9 1999,302.2 2000.8,299.1 2001.4,294.3 2002.7,296.9 2002.7,301.6 2005.1,305.7 2005.6,310.7 2006.6,314.5 2006.6,317.4 2008.3,320.3 2008.9,323.7 2009.6,327.3 2009.4,330 2011.4,335.4 2012.5,338.1 2012.7,342.8 2014.1,347 2014.5,350.9 2017,353.3 2017.2,358.3 2017.8,362.4 2019.2,367.1 2021.2,372.3 2022.8,377.2 2021.7,380.3 2022.7,383.2 2023.1,385.8 2025.7,389.8 2026.8,393.5 2026.3,398.7 2028,402.8 2029.8,405.5 2029.7,408.6 2031.6,412.9 2031.5,417.3 2032,421 2034.9,424.7 2033.8,421.7 2035.2,418.6 2037.5,413.5 2037,408.6 2039.5,403.9 2041.1,399.5 2040,397.1 2042.8,392.4 2042.6,388 2044.5,383.9 2044.3,381.2 2044.6,378.1 2045.7,374.3 2046.4,371.3 2047.2,366.8 2048.7,362.3 2050.7,359.9 2051.5,356.9 2052.6,351.9 2052.4,349.2 2054,346.5 2054.6,341.6 2055,337.9 2056.4,333.1 2056.8,328.8 2057.4,325.8 2059.5,321.3 2060.8,318.5 2060.6,315.4 2061,312.6 2062.4,307.7 2063.4,304.9 2065,301.6 2065.8,298.9 2066.3,296.4 2066,296.6 2067.1,300.4 2067.7,303.5 2070.1,306.9 2071.3,312.3 2070.7,314.9 2071.4,320 2073,324.6 2073.8,329.9 2075.6,334.7 2075.6,337.5 2077.9,342.3 2078.4,345.2 2079.2,350.4 2080.1,354.4 2082,357.3 2082,361.8 2082.4,364.4 2084.3,368.6 2084.4,371.7 2086.5,376 2087.4,380.8 2087.1,383.7 2088.9,388.3 2089.3,392.8 2091.1,397.7 2093.3,402.6 2092.6,406.4 2094.8,411.5 2095.6,416.5 2097.4,419.4 2096.9,422.9 2098.6,424.7 2099.1,422.3 2100,418.6 2101,416 2102.5,411.1 2103,407.8 2104,404.3 2104.8,401.8 2105.4,396.6 2106.4,392.7 2106.3,388.7 2108.1,383.4 2108.5,380.5 2110.7,377.4 2109.9,375 2111.2,370.5 2112.5,368.2 2113.4,364.1 2113.7,359.6 2116.1,354.6 2115.5,352.1 2117.2,348.3 2117.3,345.1 2118.2,341.5 2120.6,337.4 2120.7,334.6 2121.1,330 2123.8,325.1 2123.6,321.6 2125,316.7 2126.7,313.2 2126.7,308.5 2127.4,305.4 2129.6,301.8 2130.7,297 2131.7,296.5 2131.7,299 2133.8,304.2 2133.5,307.3 2134.5,311.6 2134.9,315.5 2136.6,319.2 2136.5,321.6 2139.1,326.9 2140.1,332.1 2141.7,336.9 2141.3,341.9 2142.8,346.2 2143.9,350.6 2146.2,354.6 2145.9,358.9 2147.2,362.8 2148.2,368 2149.7,371.3 2150.3,374 2151.4,379.3 2152.1,382.4 2152.4,386.4 2153.1,389.1" marker-start="url(#m)" marker-mid="url(#m)" marker-end="url(#m)"/><path d="M18 324H2148" stroke="#ef6a64" stroke-width="4" stroke-dasharray="4 2"/></g></svg>
<div class="a t" style="left:30.5px;top:170px;width:40px;height:22px;line-height:22px;font-size:19.5px;color:#000;letter-spacing:0.3px;">4</div>
<div class="a t" style="left:159.5px;top:170px;width:40px;height:22px;line-height:22px;font-size:19.5px;color:#000;letter-spacing:0.3px;">5</div>
<div class="a t" style="left:288.5px;top:170px;width:40px;height:22px;line-height:22px;font-size:19.5px;color:#000;letter-spacing:0.3px;">6</div>
<div class="a t" style="left:417.5px;top:170px;width:40px;height:22px;line-height:22px;font-size:19.5px;color:#000;letter-spacing:0.3px;">7</div>
<div class="a t" style="left:546.5px;top:170px;width:40px;height:22px;line-height:22px;font-size:19.5px;color:#000;letter-spacing:0.3px;">8</div>
<div class="a t" style="left:675.5px;top:170px;width:40px;height:22px;line-height:22px;font-size:19.5px;color:#000;letter-spacing:0.3px;">9</div>
<div class="a t" style="left:804.5px;top:170px;width:40px;height:22px;line-height:22px;font-size:19.5px;color:#000;letter-spacing:0.3px;">10</div>
<div class="a t" style="left:933.5px;top:170px;width:40px;height:22px;line-height:22px;font-size:19.5px;color:#000;letter-spacing:0.3px;">11</div>
<div class="a t" style="left:1062.5px;top:170px;width:40px;height:22px;line-height:22px;font-size:19.5px;color:#000;letter-spacing:0.3px;">12</div>
<div class="a t" style="left:1190.5px;top:170px;width:40px;height:22px;line-height:22px;font-size:19.5px;color:#000;letter-spacing:0.3px;">13</div>
<div class="a t" style="left:1319.5px;top:170px;width:40px;height:22px;line-height:22px;font-size:19.5px;color:#000;letter-spacing:0.3px;">14</div>
<div class="a t" style="left:1448.5px;top:170px;width:40px;height:22px;line-height:22px;font-size:19.5px;color:#000;letter-spacing:0.3px;">15</div>
<div class="a t" style="left:1577.5px;top:170px;width:40px;height:22px;line-height:22px;font-size:19.5px;color:#000;letter-spacing:0.3px;">16</div>
<div class="a t" style="left:1706.5px;top:170px;width:40px;height:22px;line-height:22px;font-size:19.5px;color:#000;letter-spacing:0.3px;">17</div>
<div class="a t" style="left:1835.5px;top:170px;width:40px;height:22px;line-height:22px;font-size:19.5px;color:#000;letter-spacing:0.3px;">18</div>
<div class="a t" style="left:1964.5px;top:170px;width:40px;height:22px;line-height:22px;font-size:19.5px;color:#000;letter-spacing:0.3px;">19</div>
<div class="a t" style="left:2093.5px;top:170px;width:40px;height:22px;line-height:22px;font-size:19.5px;color:#000;letter-spacing:0.3px;">20</div>
<div class="a t" style="left:284.5px;top:731px;width:60px;height:22px;line-height:22px;font-size:19.5px;color:#000;letter-spacing:0.3px;">0:10</div>
<div class="a t" style="left:606.5px;top:731px;width:60px;height:22px;line-height:22px;font-size:19.5px;color:#000;letter-spacing:0.3px;">0:15</div>
<div class="a t" style="left:929.5px;top:731px;width:60px;height:22px;line-height:22px;font-size:19.5px;color:#000;letter-spacing:0.3px;">0:20</div>
<div class="a t" style="left:1251.5px;top:731px;width:60px;height:22px;line-height:22px;font-size:19.5px;color:#000;letter-spacing:0.3px;">0:25</div>
<div class="a t" style="left:1573.5px;top:731px;width:60px;height:22px;line-height:22px;font-size:19.5px;color:#000;letter-spacing:0.3px;">0:30</div>
<div class="a t" style="left:1896.5px;top:731px;width:60px;height:22px;line-height:22px;font-size:19.5px;color:#000;letter-spacing:0.3px;">0:35</div>
<div class="a t" style="left:22.8px;top:256px;width:300px;height:34px;line-height:34px;font-size:19px;color:#3a1a22;letter-spacing:0.3px;">... 1-Analog 2</div>
<div class="a t" style="left:2086px;top:690.5px;width:110px;height:34px;line-height:34px;font-size:34px;color:#565656;font-weight:bold;letter-spacing:4.5px;">1/4</div>
<div class="a" style="left:2148px;top:256px;width:2px;height:472px;background:#000;"></div>
<div class="a" style="left:2154px;top:256px;width:186px;height:34px;background:#ff94a6;"></div>
<div class="a" style="left:2154px;top:290px;width:186px;height:138px;background:#bba3a7;"></div>
<div class="a" style="left:2154px;top:290px;width:186px;height:2px;background:#8c8182;"></div>
<div class="a" style="left:2344px;top:256px;width:148px;height:172px;background:#a8a8a8;"></div>
<div class="a" style="left:2496px;top:256px;width:230px;height:172px;background:#a8a8a8;"></div>
<svg class="a" style="left:0;top:0" width="2796" height="1250" viewBox="0 0 2796 1250"><circle cx="2173" cy="273" r="11.6" fill="none" stroke="#5f2632" stroke-width="2"/><path d="M2166.5 269.5h13l-6.5 9.5z" fill="#5f2632"/></svg>
<div class="a" style="left:2160px;top:294px;width:170px;height:22px;background:#c8c8c8;border:2px solid #5a5a5a;"></div>
<svg class="a" style="left:0;top:0" width="2796" height="1250" viewBox="0 0 2796 1250"><path d="M2316.2 302.5h13.6l-6.8 9.4z" fill="#000"/></svg>
<div class="a t" style="left:2201px;top:255px;width:130px;height:34px;line-height:34px;font-size:19px;color:#3a1018;-webkit-text-stroke:0.5px;letter-spacing:0.35px;">1 Analog</div>
<div class="a t" style="left:2185px;top:294px;width:174px;height:27px;line-height:27px;font-size:19px;color:#000;">Analog</div>
<div class="a" style="left:2160px;top:328px;width:170px;height:22px;background:#c8c8c8;border:2px solid #5a5a5a;"></div>
<svg class="a" style="left:0;top:0" width="2796" height="1250" viewBox="0 0 2796 1250"><path d="M2316.2 336.5h13.6l-6.8 9.4z" fill="#000"/></svg>
<div class="a t" style="left:2185px;top:328px;width:174px;height:27px;line-height:27px;font-size:19px;color:#000;">OSC1 Detune</div>
<svg class="a" style="left:0;top:0" width="2796" height="1250" viewBox="0 0 2796 1250"><circle cx="2172" cy="308" r="4.6" fill="none" stroke="#000" stroke-width="2"/><circle cx="2172" cy="342" r="4.6" fill="none" stroke="#000" stroke-width="2"/></svg>
<svg class="a" style="left:0;top:0" width="2796" height="1250" viewBox="0 0 2796 1250"><circle cx="2321" cy="411" r="10" fill="#a9a9a9" stroke="#3c3c3c" stroke-width="1.6"/><path d="M2316 411h10M2321 406v10" stroke="#000" stroke-width="1.8"/></svg>
<div class="a" style="left:2348px;top:260px;width:136px;height:22px;background:#c8c8c8;border:2px solid #5a5a5a;"></div>
<svg class="a" style="left:0;top:0" width="2796" height="1250" viewBox="0 0 2796 1250"><path d="M2470.2 268.5h13.6l-6.8 9.4z" fill="#000"/></svg>
<div class="a t" style="left:2353px;top:260px;width:140px;height:27px;line-height:27px;font-size:19px;color:#000;">All Ins</div>
<div class="a" style="left:2348px;top:294px;width:136px;height:22px;background:#c8c8c8;border:2px solid #5a5a5a;"></div>
<svg class="a" style="left:0;top:0" width="2796" height="1250" viewBox="0 0 2796 1250"><path d="M2470.2 302.5h13.6l-6.8 9.4z" fill="#000"/></svg>
<div class="a t" style="left:2371px;top:294px;width:140px;height:27px;line-height:27px;font-size:19px;color:#000;">All Channel</div>
<svg class="a" style="left:0;top:0" width="2796" height="1250" viewBox="0 0 2796 1250"><g fill="#262626"><circle cx="2357" cy="301" r="2.9"/><circle cx="2357" cy="307.4" r="2.9"/><circle cx="2357" cy="313.8" r="2.9"/></g></svg>
<div class="a" style="left:2349px;top:328px;width:33px;height:22px;background:#a8a8a8;border:2px solid #5a5a5a;"></div>
<div class="a" style="left:2393px;top:328px;width:47px;height:22px;background:#ffb532;border:2px solid #5a5a5a;"></div>
<div class="a" style="left:2451px;top:328px;width:33px;height:22px;background:#a8a8a8;border:2px solid #5a5a5a;"></div>
<div class="a" style="left:2348px;top:362px;width:136px;height:22px;background:#c8c8c8;border:2px solid #5a5a5a;"></div>
<svg class="a" style="left:0;top:0" width="2796" height="1250" viewBox="0 0 2796 1250"><path d="M2470.2 370.5h13.6l-6.8 9.4z" fill="#000"/></svg>
<div class="a t" style="left:2349px;top:328px;width:37px;height:27px;line-height:27px;font-size:19px;color:#000;text-align:center;">In</div>
<div class="a t" style="left:2393px;top:328px;width:51px;height:27px;line-height:27px;font-size:19px;color:#000;text-align:center;">Auto</div>
<div class="a t" style="left:2451px;top:328px;width:37px;height:27px;line-height:27px;font-size:19px;color:#000;text-align:center;">Off</div>
<div class="a t" style="left:2353px;top:362px;width:140px;height:27px;line-height:27px;font-size:19px;color:#000;">Master</div>
<div class="a" style="left:2348px;top:396px;width:136px;height:22px;background:#a2a2a2;border:2px solid #5a5a5a;"></div>
<div class="a" style="left:2502px;top:260px;width:88px;height:22px;background:#ffb532;border:2px solid #5a5a5a;"></div>
<div class="a" style="left:2602px;top:260px;width:38px;height:22px;background:#a8a8a8;border:2px solid #5a5a5a;"></div>
<div class="a" style="left:2652px;top:260px;width:38px;height:22px;background:#ff3636;border:2px solid #5a5a5a;"></div>
<div class="a" style="left:2502px;top:294px;width:88px;height:22px;background:#c8c8c8;border:2px solid #5a5a5a;"></div>
<div class="a" style="left:2504px;top:296px;width:74px;height:22px;background:#70d7ff;"></div>
<div class="a" style="left:2602px;top:294px;width:88px;height:22px;background:#c8c8c8;border:2px solid #5a5a5a;"></div>
<div class="a" style="left:2502px;top:328px;width:56px;height:22px;background:#c8c8c8;border:2px solid #5a5a5a;"></div>
<div class="a" style="left:2568px;top:328px;width:56px;height:22px;background:#c8c8c8;border:2px solid #5a5a5a;"></div>
<div class="a" style="left:2706px;top:258px;width:6px;height:170px;background:#2c2c2c;"></div>
<div class="a" style="left:2714px;top:258px;width:6px;height:170px;background:#2c2c2c;"></div>
<div class="a" style="left:2706px;top:274px;width:14px;height:2.2px;background:#a8a8a8;"></div>
<div class="a" style="left:2154px;top:432px;width:186px;height:34px;background:#ff39d4;"></div>
<div class="a" style="left:2154px;top:466px;width:186px;height:36px;background:#a6789f;"></div>
<div class="a" style="left:2154px;top:466px;width:186px;height:2px;background:#86688a;"></div>
<div class="a" style="left:2344px;top:432px;width:148px;height:70px;background:#898989;"></div>
<div class="a" style="left:2496px;top:432px;width:230px;height:70px;background:#898989;"></div>
<svg class="a" style="left:0;top:0" width="2796" height="1250" viewBox="0 0 2796 1250"><circle cx="2173" cy="449" r="11.6" fill="none" stroke="#5f0f4e" stroke-width="2"/><path d="M2166.5 445.5h13l-6.5 9.5z" fill="#5f0f4e"/></svg>
<div class="a t" style="left:2502px;top:260px;width:92px;height:27px;line-height:27px;font-size:19px;color:#000;text-align:center;-webkit-text-stroke:0.5px;letter-spacing:0.35px;">1</div>
<div class="a t" style="left:2602px;top:260px;width:42px;height:27px;line-height:27px;font-size:19px;color:#000;text-align:center;">S</div>
<div class="a t" style="left:2502px;top:294px;width:92px;height:27px;line-height:27px;font-size:19px;color:#000;text-align:center;letter-spacing:0.3px;">0</div>
<div class="a t" style="left:2602px;top:294px;width:92px;height:27px;line-height:27px;font-size:19px;color:#000;text-align:center;">C</div>
<div class="a t" style="left:2502px;top:328px;width:60px;height:27px;line-height:27px;font-size:19px;color:#000;text-align:center;">-inf</div>
<div class="a t" style="left:2568px;top:328px;width:60px;height:27px;line-height:27px;font-size:19px;color:#000;text-align:center;">-inf</div>
<div class="a" style="left:2160px;top:470px;width:170px;height:22px;background:#c8c8c8;border:2px solid #5a5a5a;"></div>
<svg class="a" style="left:0;top:0" width="2796" height="1250" viewBox="0 0 2796 1250"><path d="M2316.2 478.5h13.6l-6.8 9.4z" fill="#000"/></svg>
<div class="a t" style="left:2201px;top:431px;width:130px;height:34px;line-height:34px;font-size:19px;color:#3a0830;-webkit-text-stroke:0.5px;letter-spacing:0.35px;">2 MIDI</div>
<div class="a t" style="left:2185px;top:470px;width:174px;height:27px;line-height:27px;font-size:19px;color:#000;">None</div>
<div class="a" style="left:2348px;top:438px;width:136px;height:22px;background:#c8c8c8;border:2px solid #5a5a5a;"></div>
<svg class="a" style="left:0;top:0" width="2796" height="1250" viewBox="0 0 2796 1250"><path d="M2470.2 446.5h13.6l-6.8 9.4z" fill="#000"/></svg>
<div class="a t" style="left:2353px;top:438px;width:140px;height:27px;line-height:27px;font-size:19px;color:#000;">No Output</div>
<div class="a" style="left:2348px;top:472px;width:136px;height:22px;background:#878787;border:2px solid #5a5a5a;"></div>
<div class="a" style="left:2502px;top:436px;width:88px;height:22px;background:#ffb532;border:2px solid #5a5a5a;"></div>
<div class="a" style="left:2602px;top:436px;width:38px;height:22px;background:#a8a8a8;border:2px solid #5a5a5a;"></div>
<div class="a" style="left:2652px;top:436px;width:38px;height:22px;background:#a8a8a8;border:2px solid #5a5a5a;"></div>
<svg class="a" style="left:0;top:0" width="2796" height="1250" viewBox="0 0 2796 1250"><g fill="#2c2c2c"><circle cx="2712.6" cy="436.6" r="3.1"/><circle cx="2712.6" cy="444.68" r="3.1"/><circle cx="2712.6" cy="452.76" r="3.1"/><circle cx="2712.6" cy="460.84" r="3.1"/><circle cx="2712.6" cy="468.92" r="3.1"/><circle cx="2712.6" cy="477" r="3.1"/><circle cx="2712.6" cy="485.08" r="3.1"/><circle cx="2712.6" cy="493.16" r="3.1"/></g></svg>
<div class="a t" style="left:2502px;top:436px;width:92px;height:27px;line-height:27px;font-size:19px;color:#000;text-align:center;-webkit-text-stroke:0.5px;letter-spacing:0.35px;">2</div>
<div class="a t" style="left:2602px;top:436px;width:42px;height:27px;line-height:27px;font-size:19px;color:#000;text-align:center;">S</div>
<div class="a" style="left:2154px;top:506px;width:186px;height:34px;background:#ff3636;"></div>
<div class="a" style="left:2344px;top:506px;width:148px;height:34px;background:#898989;"></div>
<div class="a" style="left:2496px;top:506px;width:230px;height:34px;background:#898989;"></div>
<svg class="a" style="left:0;top:0" width="2796" height="1250" viewBox="0 0 2796 1250"><circle cx="2173" cy="523" r="11.6" fill="none" stroke="#4a0a0a" stroke-width="2"/><path d="M2169.5 516.5v13l10-6.5z" fill="#4a0a0a"/></svg>
<div class="a" style="left:2348px;top:510px;width:136px;height:22px;background:#878787;border:2px solid #5a5a5a;"></div>
<div class="a" style="left:2502px;top:510px;width:88px;height:22px;background:#ffb532;border:2px solid #5a5a5a;"></div>
<div class="a" style="left:2602px;top:510px;width:38px;height:22px;background:#a8a8a8;border:2px solid #5a5a5a;"></div>
<div class="a" style="left:2652px;top:510px;width:38px;height:22px;background:#a8a8a8;border:2px solid #5a5a5a;"></div>
<svg class="a" style="left:0;top:0" width="2796" height="1250" viewBox="0 0 2796 1250"><circle cx="2673" cy="523.5" r="7.2"/></svg>
<div class="a t" style="left:2201px;top:505px;width:130px;height:34px;line-height:34px;font-size:19px;color:#4a0a0a;-webkit-text-stroke:0.5px;letter-spacing:0.35px;white-space:pre;">3 Audio</div>
<div class="a t" style="left:2502px;top:510px;width:92px;height:27px;line-height:27px;font-size:19px;color:#000;text-align:center;-webkit-text-stroke:0.5px;letter-spacing:0.35px;">3</div>
<div class="a t" style="left:2602px;top:510px;width:42px;height:27px;line-height:27px;font-size:19px;color:#000;text-align:center;">S</div>
<div class="a" style="left:2706px;top:508px;width:6px;height:30px;background:#2c2c2c;"></div>
<div class="a" style="left:2714px;top:508px;width:6px;height:30px;background:#2c2c2c;"></div>
<div class="a" style="left:2706px;top:510px;width:14px;height:1.6px;background:#898989;"></div>
<div class="a" style="left:2154px;top:544px;width:186px;height:34px;background:#e553a0;"></div>
<div class="a" style="left:2344px;top:544px;width:148px;height:34px;background:#898989;"></div>
<div class="a" style="left:2496px;top:544px;width:230px;height:34px;background:#898989;"></div>
<svg class="a" style="left:0;top:0" width="2796" height="1250" viewBox="0 0 2796 1250"><circle cx="2173" cy="561" r="11.6" fill="none" stroke="#47102e" stroke-width="2"/><path d="M2169.5 554.5v13l10-6.5z" fill="#47102e"/></svg>
<div class="a" style="left:2348px;top:548px;width:136px;height:22px;background:#878787;border:2px solid #5a5a5a;"></div>
<div class="a" style="left:2502px;top:548px;width:88px;height:22px;background:#ffb532;border:2px solid #5a5a5a;"></div>
<div class="a" style="left:2602px;top:548px;width:38px;height:22px;background:#a8a8a8;border:2px solid #5a5a5a;"></div>
<div class="a" style="left:2652px;top:548px;width:38px;height:22px;background:#a8a8a8;border:2px solid #5a5a5a;"></div>
<svg class="a" style="left:0;top:0" width="2796" height="1250" viewBox="0 0 2796 1250"><circle cx="2673" cy="561.5" r="7.2"/></svg>
<div class="a t" style="left:2201px;top:543px;width:130px;height:34px;line-height:34px;font-size:19px;color:#47102e;-webkit-text-stroke:0.5px;letter-spacing:0.35px;white-space:pre;">4 Audio</div>
<div class="a t" style="left:2502px;top:548px;width:92px;height:27px;line-height:27px;font-size:19px;color:#000;text-align:center;-webkit-text-stroke:0.5px;letter-spacing:0.35px;">4</div>
<div class="a t" style="left:2602px;top:548px;width:42px;height:27px;line-height:27px;font-size:19px;color:#000;text-align:center;">S</div>
<div class="a" style="left:2706px;top:546px;width:6px;height:30px;background:#2c2c2c;"></div>
<div class="a" style="left:2714px;top:546px;width:6px;height:30px;background:#2c2c2c;"></div>
<div class="a" style="left:2706px;top:548px;width:14px;height:1.6px;background:#898989;"></div>
<div class="a" style="left:2154px;top:582px;width:572px;height:28px;background:#8b8b8b;"></div>
<div class="a" style="left:2154px;top:616px;width:186px;height:34px;background:#cc9927;"></div>
<div class="a" style="left:2344px;top:616px;width:148px;height:34px;background:#898989;"></div>
<div class="a" style="left:2496px;top:616px;width:230px;height:34px;background:#898989;"></div>
<svg class="a" style="left:0;top:0" width="2796" height="1250" viewBox="0 0 2796 1250"><circle cx="2173" cy="633" r="11.6" fill="none" stroke="#2e2206" stroke-width="2"/><path d="M2169.5 626.5v13l10-6.5z" fill="#2e2206"/></svg>
<div class="a" style="left:2348px;top:620px;width:136px;height:22px;background:#878787;border:2px solid #5a5a5a;"></div>
<div class="a" style="left:2502px;top:620px;width:88px;height:22px;background:#ffb532;border:2px solid #5a5a5a;"></div>
<div class="a" style="left:2602px;top:620px;width:30px;height:22px;background:#a8a8a8;border:2px solid #5a5a5a;"></div>
<div class="a" style="left:2644px;top:620px;width:46px;height:22px;background:#ffb532;border:2px solid #5a5a5a;"></div>
<div class="a" style="left:2706px;top:618px;width:6px;height:30px;background:#2c2c2c;"></div>
<div class="a" style="left:2714px;top:618px;width:6px;height:30px;background:#2c2c2c;"></div>
<div class="a" style="left:2706px;top:620px;width:14px;height:1.6px;background:#898989;"></div>
<div class="a" style="left:2154px;top:654px;width:186px;height:34px;background:#ffa529;"></div>
<div class="a" style="left:2344px;top:654px;width:148px;height:34px;background:#898989;"></div>
<div class="a" style="left:2496px;top:654px;width:230px;height:34px;background:#898989;"></div>
<svg class="a" style="left:0;top:0" width="2796" height="1250" viewBox="0 0 2796 1250"><circle cx="2173" cy="671" r="11.6" fill="none" stroke="#3b2504" stroke-width="2"/><path d="M2169.5 664.5v13l10-6.5z" fill="#3b2504"/></svg>
<div class="a t" style="left:2201px;top:615px;width:130px;height:34px;line-height:34px;font-size:19px;color:#2e2206;-webkit-text-stroke:0.5px;letter-spacing:0.35px;white-space:pre;">A Reverb</div>
<div class="a t" style="left:2502px;top:620px;width:92px;height:27px;line-height:27px;font-size:19px;color:#000;text-align:center;-webkit-text-stroke:0.5px;letter-spacing:0.35px;">A</div>
<div class="a t" style="left:2602px;top:620px;width:34px;height:27px;line-height:27px;font-size:19px;color:#000;text-align:center;">S</div>
<div class="a t" style="left:2644px;top:620px;width:50px;height:27px;line-height:27px;font-size:19px;color:#000;text-align:center;">Post</div>
<div class="a" style="left:2348px;top:658px;width:136px;height:22px;background:#878787;border:2px solid #5a5a5a;"></div>
<div class="a" style="left:2502px;top:658px;width:88px;height:22px;background:#ffb532;border:2px solid #5a5a5a;"></div>
<div class="a" style="left:2602px;top:658px;width:30px;height:22px;background:#a8a8a8;border:2px solid #5a5a5a;"></div>
<div class="a" style="left:2644px;top:658px;width:46px;height:22px;background:#ffb532;border:2px solid #5a5a5a;"></div>
<div class="a" style="left:2706px;top:656px;width:6px;height:30px;background:#2c2c2c;"></div>
<div class="a" style="left:2714px;top:656px;width:6px;height:30px;background:#2c2c2c;"></div>
<div class="a" style="left:2706px;top:658px;width:14px;height:1.6px;background:#898989;"></div>
<div class="a" style="left:2154px;top:692px;width:186px;height:34px;background:#f66c03;"></div>
<div class="a" style="left:2344px;top:692px;width:148px;height:34px;background:#898989;"></div>
<div class="a" style="left:2496px;top:692px;width:230px;height:34px;background:#898989;"></div>
<svg class="a" style="left:0;top:0" width="2796" height="1250" viewBox="0 0 2796 1250"><circle cx="2173" cy="709" r="11.6" fill="none" stroke="#3a1800" stroke-width="2"/><path d="M2169.5 702.5v13l10-6.5z" fill="#3a1800"/></svg>
<div class="a t" style="left:2201px;top:653px;width:130px;height:34px;line-height:34px;font-size:19px;color:#3b2504;-webkit-text-stroke:0.5px;letter-spacing:0.35px;white-space:pre;">B Delay</div>
<div class="a t" style="left:2502px;top:658px;width:92px;height:27px;line-height:27px;font-size:19px;color:#000;text-align:center;-webkit-text-stroke:0.5px;letter-spacing:0.35px;">B</div>
<div class="a t" style="left:2602px;top:658px;width:34px;height:27px;line-height:27px;font-size:19px;color:#000;text-align:center;">S</div>
<div class="a t" style="left:2644px;top:658px;width:50px;height:27px;line-height:27px;font-size:19px;color:#000;text-align:center;">Post</div>
<div class="a" style="left:2348px;top:696px;width:136px;height:22px;background:#c8c8c8;border:2px solid #5a5a5a;"></div>
<svg class="a" style="left:0;top:0" width="2796" height="1250" viewBox="0 0 2796 1250"><path d="M2470.2 704.5h13.6l-6.8 9.4z" fill="#000"/></svg>
<div class="a t" style="left:2201px;top:691px;width:130px;height:34px;line-height:34px;font-size:19px;color:#3a1800;-webkit-text-stroke:0.5px;letter-spacing:0.35px;white-space:pre;"> Master</div>
<div class="a t" style="left:2371px;top:696px;width:140px;height:27px;line-height:27px;font-size:19px;color:#000;">1/2</div>
<svg class="a" style="left:0;top:0" width="2796" height="1250" viewBox="0 0 2796 1250"><path d="M2355 706v10M2361 706v10" stroke="#000" stroke-width="3"/><circle cx="2355" cy="702" r="1.7"/><circle cx="2361" cy="702" r="1.7"/></svg>
<div class="a" style="left:2502px;top:696px;width:88px;height:22px;background:#c8c8c8;border:2px solid #5a5a5a;"></div>
<div class="a" style="left:2504px;top:698px;width:74px;height:22px;background:#70d7ff;"></div>
<div class="a" style="left:2602px;top:696px;width:88px;height:22px;background:#c8c8c8;border:2px solid #5a5a5a;"></div>
<div class="a" style="left:2604px;top:698px;width:74px;height:22px;background:#4a9ef7;"></div>
<div class="a" style="left:2706px;top:694px;width:6px;height:30px;background:#2c2c2c;"></div>
<div class="a" style="left:2714px;top:694px;width:6px;height:30px;background:#2c2c2c;"></div>
<div class="a" style="left:2706px;top:696px;width:14px;height:1.6px;background:#898989;"></div>
<svg class="a" style="left:0;top:0" width="2796" height="1250" viewBox="0 0 2796 1250"><circle cx="2673" cy="273.5" r="7.2"/><path d="M2674.2 275.5v-7.5" stroke="#ff3636" stroke-width="1.8"/><ellipse cx="2672.2" cy="275.7" rx="2.6" ry="2.1" fill="#ff3636"/></svg>
<div class="a t" style="left:2502px;top:696px;width:92px;height:27px;line-height:27px;font-size:19px;color:#000;text-align:center;letter-spacing:0.3px;">0</div>
<div class="a t" style="left:2602px;top:696px;width:92px;height:27px;line-height:27px;font-size:19px;color:#000;text-align:center;letter-spacing:0.3px;">0</div>
<svg class="a" style="left:0;top:0" width="2796" height="1250" viewBox="0 0 2796 1250"><circle cx="2673" cy="449" r="7.2"/><path d="M2674.2 451v-7.5" stroke="#a8a8a8" stroke-width="1.8"/><ellipse cx="2672.2" cy="451.2" rx="2.6" ry="2.1" fill="#a8a8a8"/></svg>
<div class="a" style="left:2160px;top:192px;width:56px;height:22px;background:#a8a8a8;border-radius:11px;"></div>
<svg class="a" style="left:0;top:0" width="2796" height="1250" viewBox="0 0 2796 1250"><circle cx="2171" cy="233" r="11" fill="#a8a8a8"/><path d="M2169 233h9" stroke="#000" stroke-width="2.6"/><path d="M2171 226.5v13l-8.5-6.5z"/><circle cx="2205" cy="233" r="11" fill="#8a8a8a"/><path d="M2198 233h9" stroke="#666" stroke-width="2.6"/><path d="M2205 226.5v13l8.5-6.5z" fill="#666"/></svg>
<div class="a t" style="left:2160px;top:191px;width:56px;height:23px;line-height:23px;font-size:19px;color:#000;text-align:center;">Set</div>
<div class="a" style="left:2242px;top:222px;width:42px;height:22px;background:#70d7ff;"></div>
<div class="a" style="left:2296px;top:222px;width:42px;height:22px;background:#a8a8a8;"></div>
<svg class="a" style="left:0;top:0" width="2796" height="1250" viewBox="0 0 2796 1250"><path d="M2258.2 237.2L2267.1 228.6" stroke="#000" stroke-width="2.8"/><circle cx="2258.2" cy="237.2" r="3.2"/><circle cx="2267.1" cy="228.6" r="3.2"/><rect x="2310" y="232" width="14" height="9"/><path d="M2313 232v-2.5a4 4 0 0 1 8 0v2.5" fill="none" stroke="#000" stroke-width="2"/></svg>
<div class="a" style="left:2746px;top:228px;width:14px;height:281px;background:#393939;border-radius:7px;"></div>
<div class="a" style="left:2739.8px;top:567.9px;width:26.2px;height:26.2px;background:#ffb532;border-radius:50%;"></div>
<div class="a" style="left:2739.8px;top:605.9px;width:26.2px;height:26.2px;background:#ffb532;border-radius:50%;"></div>
<div class="a" style="left:2739.8px;top:643.9px;width:26.2px;height:26.2px;background:#ffb532;border-radius:50%;"></div>
<div class="a" style="left:2739.8px;top:681.9px;width:26.2px;height:26.2px;background:#1b1b1b;border-radius:50%;"></div>
<div class="a" style="left:8px;top:776px;width:2772px;height:391.5px;background:#5b5b5b;border-radius:8px;"></div>
<svg class="a" style="left:0;top:0" width="2796" height="1250" viewBox="0 0 2796 1250"><g fill="#3c3c3c"><circle cx="22.7" cy="934" r="3"/><circle cx="22.7" cy="941.4" r="3"/><circle cx="22.7" cy="948.8" r="3"/><circle cx="22.7" cy="956.2" r="3"/><circle cx="22.7" cy="963.6" r="3"/><circle cx="22.7" cy="971" r="3"/><circle cx="22.7" cy="978.4" r="3"/><circle cx="22.7" cy="985.8" r="3"/><circle cx="22.7" cy="993.2" r="3"/><circle cx="22.7" cy="1000.6" r="3"/><circle cx="22.7" cy="1008" r="3"/></g></svg>
<div class="a t" style="left:2732.9px;top:568px;width:40px;height:26px;line-height:26px;font-size:12.5px;color:#5a5a5a;text-align:center;font-weight:bold;transform:scaleX(1.25);">I·O</div>
<div class="a t" style="left:2732.9px;top:606px;width:40px;height:26px;line-height:26px;font-size:12.5px;color:#5a5a5a;text-align:center;font-weight:bold;transform:scaleX(1.25);">R</div>
<div class="a t" style="left:2732.9px;top:644px;width:40px;height:26px;line-height:26px;font-size:12.5px;color:#5a5a5a;text-align:center;font-weight:bold;transform:scaleX(1.25);">M</div>
<div class="a t" style="left:2732.9px;top:682px;width:40px;height:26px;line-height:26px;font-size:12.5px;color:#5a5a5a;text-align:center;font-weight:bold;transform:scaleX(1.25);">D</div>
<div class="a" style="left:38px;top:784px;width:1420px;height:376px;background:#a9a9a9;border-radius:8px;"></div>
<div class="a" style="left:560px;top:818px;width:344px;height:82px;background:#8a8a8a;border-radius:8px;"></div>
<div class="a" style="left:908px;top:818px;width:282px;height:82px;background:#8a8a8a;border-radius:8px;"></div>
<div class="a" style="left:1194px;top:818px;width:116px;height:337px;background:#8a8a8a;border-radius:8px;"></div>
<div class="a" style="left:1314px;top:818px;width:140px;height:337px;background:#8a8a8a;border-radius:8px;"></div>
<div class="a" style="left:42px;top:904px;width:164px;height:166px;background:#8a8a8a;border-radius:8px;"></div>
<div class="a" style="left:42px;top:1074px;width:513px;height:81px;background:#8a8a8a;border-radius:8px;"></div>
<div class="a" style="left:560px;top:1074px;width:344px;height:81px;background:#8a8a8a;border-radius:8px;"></div>
<div class="a" style="left:908px;top:1074px;width:282px;height:81px;background:#8a8a8a;border-radius:8px;"></div>
<div class="a" style="left:210px;top:904px;width:980px;height:166px;background:#2a2a2a;border-radius:8px;"></div>
<div class="a" style="left:48px;top:830px;width:56px;height:22px;background:#ffb532;border:2px solid #5a5a5a;"></div>
<div class="a" style="left:114px;top:830px;width:76px;height:22px;background:#c8c8c8;border:2px solid #5a5a5a;"></div>
<div class="a" style="left:116px;top:832px;width:62px;height:22px;background:#70d7ff;"></div>
<div class="a" style="left:114px;top:862px;width:76px;height:22px;background:#c8c8c8;border:2px solid #5a5a5a;"></div>
<div class="a" style="left:210px;top:848px;width:58px;height:22px;background:#c8c8c8;border:2px solid #5a5a5a;"></div>
<div class="a" style="left:48px;top:1086px;width:56px;height:22px;background:#ffb532;border:2px solid #5a5a5a;"></div>
<div class="a" style="left:114px;top:1086px;width:76px;height:22px;background:#c8c8c8;border:2px solid #5a5a5a;"></div>
<div class="a" style="left:116px;top:1088px;width:62px;height:22px;background:#70d7ff;"></div>
<div class="a" style="left:114px;top:1118px;width:76px;height:22px;background:#c8c8c8;border:2px solid #5a5a5a;"></div>
<div class="a" style="left:210px;top:1104px;width:58px;height:22px;background:#c8c8c8;border:2px solid #5a5a5a;"></div>
<div class="a" style="left:568px;top:830px;width:45.5px;height:22px;background:#ffb532;border:2px solid #5a5a5a;"></div>
<div class="a" style="left:624px;top:830px;width:73px;height:22px;background:#c8c8c8;border:2px solid #5a5a5a;"></div>
<div class="a" style="left:624px;top:862px;width:73px;height:22px;background:#70d7ff;border:2px solid #5a5a5a;"></div>
<div class="a" style="left:916px;top:830px;width:56px;height:22px;background:#ffb532;border:2px solid #5a5a5a;"></div>
<div class="a" style="left:568px;top:1086px;width:45.5px;height:22px;background:#a9a9a9;border:2px solid #5a5a5a;"></div>
<div class="a" style="left:624px;top:1086px;width:73px;height:22px;background:#8a8a8a;border:2px solid #5a5a5a;"></div>
<div class="a" style="left:624px;top:1118px;width:73px;height:22px;background:#a9a9a9;border:2px solid #5a5a5a;"></div>
<div class="a" style="left:916px;top:1086px;width:56px;height:22px;background:#a9a9a9;border:2px solid #5a5a5a;"></div>
<div class="a" style="left:48px;top:914px;width:56px;height:22px;background:#a9a9a9;border:2px solid #5a5a5a;"></div>
<div class="a" style="left:114px;top:914px;width:76px;height:22px;background:#8a8a8a;border:2px solid #5a5a5a;"></div>
<div class="a" style="left:114px;top:946px;width:76px;height:22px;background:#8a8a8a;border:2px solid #5a5a5a;"></div>
<div class="a" style="left:1202px;top:830px;width:54px;height:22px;background:#a9a9a9;border:2px solid #5a5a5a;"></div>
<div class="a" style="left:1266px;top:830px;width:30px;height:22px;background:#c8c8c8;border:2px solid #5a5a5a;"></div>
<div class="a" style="left:1266px;top:862px;width:30px;height:22px;background:#a9a9a9;border:2px solid #5a5a5a;"></div>
<div class="a" style="left:1202px;top:1086px;width:54px;height:22px;background:#a9a9a9;border:2px solid #5a5a5a;"></div>
<div class="a" style="left:1266px;top:1086px;width:30px;height:22px;background:#c8c8c8;border:2px solid #5a5a5a;"></div>
<div class="a" style="left:1266px;top:1118px;width:30px;height:22px;background:#a9a9a9;border:2px solid #5a5a5a;"></div>
<div class="a" style="left:1322px;top:914px;width:38px;height:22px;background:#a9a9a9;border:2px solid #5a5a5a;"></div>
<div class="a" style="left:1370px;top:914px;width:74px;height:22px;background:#8a8a8a;border:2px solid #5a5a5a;"></div>
<div class="a" style="left:1370px;top:946px;width:74px;height:22px;background:#8a8a8a;border:2px solid #5a5a5a;"></div>
<div class="a" style="left:1322px;top:1016px;width:38px;height:22px;background:#a9a9a9;border:2px solid #5a5a5a;"></div>
<div class="a" style="left:1370px;top:1016px;width:74px;height:22px;background:#8a8a8a;border:2px solid #5a5a5a;"></div>
<div class="a" style="left:1322px;top:1086px;width:38px;height:22px;background:#a9a9a9;border:2px solid #5a5a5a;"></div>
<div class="a" style="left:1370px;top:1086px;width:74px;height:22px;background:#8a8a8a;border:2px solid #5a5a5a;"></div>
<div class="a" style="left:1370px;top:1118px;width:74px;height:22px;background:#a9a9a9;border:2px solid #5a5a5a;"></div>
<svg class="a" style="left:0;top:0" width="2796" height="1250" viewBox="0 0 2796 1250"><circle cx="57" cy="801" r="12" fill="#ffb532" stroke="#5a5a5a" stroke-width="1.8"/><circle cx="1407" cy="801" r="11.8" fill="#a9a9a9" stroke="#5a5a5a" stroke-width="1.6"/><path d="M1401 800.5A6 6 0 0 1 1411.9 797.6" fill="none" stroke="#000" stroke-width="2.1"/><path d="M1413 801.5A6 6 0 0 1 1402.1 804.4" fill="none" stroke="#000" stroke-width="2.1"/><path d="M1397.3 800h7.4l-3.7 4.4z" fill="#000"/><path d="M1409.3 802h7.4l-3.7-4.4z" fill="#000"/><circle cx="1439" cy="801" r="11.8" fill="#a9a9a9" stroke="#5a5a5a" stroke-width="1.6"/><path d="M1432.5 794.5h10l3 3v10h-13z" fill="#000"/><rect x="1435.5" y="795.5" width="6" height="4" fill="#a9a9a9"/><path d="M1349.5 786v30M1370.5 786v30" stroke="#6a6a6a" stroke-width="1"/><path d="M178.5 874.5l14-8v16z" fill="#70d7ff"/><path d="M217 868v-11l25 8" fill="none" stroke="#000" stroke-width="1.8"/><path d="M254 857h13l-6.5 9z" fill="#000"/><path d="M314.5 886.6A17.2 17.2 0 1 1 331.7 869.4" fill="none" stroke="#333333" stroke-width="4.2"/><path d="M304.18 859.08L301.42 856.32" stroke="#a9a9a9" stroke-width="8.6"/><path d="M313.44 868.34L302.13 857.03" stroke="#333333" stroke-width="4.6" stroke-linecap="round"/><path d="M288.9 853h11v-10z" fill="#333333"/><path d="M394.7 886.6A17.2 17.2 0 1 1 411.9 869.4" fill="none" stroke="#333333" stroke-width="4.2"/><path d="M384.38 859.08L381.62 856.32" stroke="#a9a9a9" stroke-width="8.6"/><path d="M393.64 868.34L382.33 857.03" stroke="#333333" stroke-width="4.6" stroke-linecap="round"/><path d="M369.1 853h11v-10z" fill="#333333"/><path d="M488.7 886.6A17.2 17.2 0 1 1 505.9 869.4" fill="none" stroke="#333333" stroke-width="4.2"/><path d="M476.54 857.24A17.2 17.2 0 0 1 503.22 860.18" fill="none" stroke="#70d7ff" stroke-width="4.2"/><path d="M501.03 861.58L504.32 859.49" stroke="#a9a9a9" stroke-width="8.6"/><path d="M489.97 868.6L503.48 860.02" stroke="#333333" stroke-width="4.6" stroke-linecap="round"/><path d="M463.1 853h11v-10z" fill="#70d7ff"/><circle cx="468" cy="860" r="4.6" fill="#b4b4b4" stroke="#000" stroke-width="2.2"/><path d="M178.5 1130.5l14-8v16z" fill="#70d7ff"/><path d="M217 1124v-11l25 8" fill="none" stroke="#000" stroke-width="1.8"/><path d="M254 1113h13l-6.5 9z" fill="#000"/><path d="M314.5 1142.6A17.2 17.2 0 1 1 331.7 1125.4" fill="none" stroke="#333333" stroke-width="4.2"/><path d="M304.18 1115.08L301.42 1112.32" stroke="#8a8a8a" stroke-width="8.6"/><path d="M313.44 1124.34L302.13 1113.03" stroke="#333333" stroke-width="4.6" stroke-linecap="round"/><path d="M288.9 1109h11v-10z" fill="#333333"/><path d="M394.7 1142.6A17.2 17.2 0 1 1 411.9 1125.4" fill="none" stroke="#333333" stroke-width="4.2"/><path d="M384.38 1115.08L381.62 1112.32" stroke="#8a8a8a" stroke-width="8.6"/><path d="M393.64 1124.34L382.33 1113.03" stroke="#333333" stroke-width="4.6" stroke-linecap="round"/><path d="M369.1 1109h11v-10z" fill="#333333"/><path d="M488.7 1142.6A17.2 17.2 0 1 1 505.9 1125.4" fill="none" stroke="#333333" stroke-width="4.2"/><path d="M478.38 1115.08L475.62 1112.32" stroke="#8a8a8a" stroke-width="8.6"/><path d="M487.64 1124.34L476.33 1113.03" stroke="#333333" stroke-width="4.6" stroke-linecap="round"/><path d="M463.1 1109h11v-10z" fill="#333333"/><path d="M683 839h13l-6.5 9z" fill="#000"/><path d="M743 886.6A17.2 17.2 0 1 1 760.2 869.4" fill="none" stroke="#333333" stroke-width="4.2"/><path d="M743 886.6A17.2 17.2 0 1 1 760.2 869.4" fill="none" stroke="#70d7ff" stroke-width="4.2"/><path d="M757.6 869.4L761.5 869.4" stroke="#8a8a8a" stroke-width="8.6"/><path d="M744.5 869.4L760.5 869.4" stroke="#333333" stroke-width="4.6" stroke-linecap="round"/><path d="M833 886.6A17.2 17.2 0 1 1 850.2 869.4" fill="none" stroke="#333333" stroke-width="4.2"/><path d="M833 884L833 887.9" stroke="#8a8a8a" stroke-width="8.6"/><path d="M833 870.9L833 886.9" stroke="#333333" stroke-width="4.6" stroke-linecap="round"/><path d="M1022.8 888.6A17.2 17.2 0 1 1 1040 871.4" fill="none" stroke="#333333" stroke-width="4.2"/><path d="M1012.48 861.08L1009.72 858.32" stroke="#8a8a8a" stroke-width="8.6"/><path d="M1021.74 870.34L1010.43 859.03" stroke="#333333" stroke-width="4.6" stroke-linecap="round"/><path d="M997.2 855h11v-10z" fill="#333333"/><path d="M1105 888.6A17.2 17.2 0 1 1 1122.2 871.4" fill="none" stroke="#333333" stroke-width="4.2"/><path d="M1105 888.6A17.2 17.2 0 0 1 1091.25 861.07" fill="none" stroke="#70d7ff" stroke-width="4.2"/><path d="M1093.32 862.63L1090.21 860.29" stroke="#8a8a8a" stroke-width="8.6"/><path d="M1103.8 870.5L1091.01 860.89" stroke="#333333" stroke-width="4.6" stroke-linecap="round"/><path d="M683 1095h13l-6.5 9z" fill="#000"/><path d="M743 1142.6A17.2 17.2 0 1 1 760.2 1125.4" fill="none" stroke="#717171" stroke-width="4.2"/><path d="M743 1142.6A17.2 17.2 0 1 1 760.2 1125.4" fill="none" stroke="#c4c4c4" stroke-width="4.2"/><path d="M757.6 1125.4L761.5 1125.4" stroke="#8a8a8a" stroke-width="8.6"/><path d="M744.5 1125.4L760.5 1125.4" stroke="#717171" stroke-width="4.6" stroke-linecap="round"/><path d="M833 1142.6A17.2 17.2 0 1 1 850.2 1125.4" fill="none" stroke="#717171" stroke-width="4.2"/><path d="M833 1140L833 1143.9" stroke="#8a8a8a" stroke-width="8.6"/><path d="M833 1126.9L833 1142.9" stroke="#717171" stroke-width="4.6" stroke-linecap="round"/><path d="M1022.8 1144.6A17.2 17.2 0 1 1 1040 1127.4" fill="none" stroke="#717171" stroke-width="4.2"/><path d="M1012.48 1117.08L1009.72 1114.32" stroke="#8a8a8a" stroke-width="8.6"/><path d="M1021.74 1126.34L1010.43 1115.03" stroke="#717171" stroke-width="4.6" stroke-linecap="round"/><path d="M997.2 1111h11v-10z" fill="#717171"/><path d="M1105 1144.6A17.2 17.2 0 1 1 1122.2 1127.4" fill="none" stroke="#717171" stroke-width="4.2"/><path d="M1105 1144.6A17.2 17.2 0 0 1 1091.25 1117.07" fill="none" stroke="#c4c4c4" stroke-width="4.2"/><path d="M1093.32 1118.63L1090.21 1116.29" stroke="#8a8a8a" stroke-width="8.6"/><path d="M1103.8 1126.5L1091.01 1116.89" stroke="#717171" stroke-width="4.6" stroke-linecap="round"/><path d="M178.5 958.8l14-8v16z" fill="#a9a9a9"/><path d="M100.5 1054.6A17.2 17.2 0 1 1 117.7 1037.4" fill="none" stroke="#717171" stroke-width="4.2"/><path d="M100.5 1054.6A17.2 17.2 0 0 1 87.78 1025.82" fill="none" stroke="#c4c4c4" stroke-width="4.2"/><path d="M89.7 1027.57L86.82 1024.95" stroke="#8a8a8a" stroke-width="8.6"/><path d="M99.39 1036.39L87.56 1025.62" stroke="#717171" stroke-width="4.6" stroke-linecap="round"/><path d="M236 989H551" stroke="#70d7ff" stroke-width="2.6"/><rect x="231.5" y="983.5" width="10" height="10" fill="none" stroke="#ffb532" stroke-width="1.6"/><rect x="387" y="983.5" width="10" height="10" fill="none" stroke="#ffb532" stroke-width="1.6"/><path d="M756.5 1004.5H827.5M950.5 1004.5H1003.5M1104.5 1004.5H1180" stroke="#6e6e6e" stroke-width="1.2"/><path d="M1082 1049.5h10l-5 6z" fill="#ffb532"/><path d="M1233 972.9A17.2 17.2 0 1 1 1250.2 955.7" fill="none" stroke="#717171" stroke-width="4.2"/><path d="M1233 972.9A17.2 17.2 0 0 1 1220.28 944.12" fill="none" stroke="#c4c4c4" stroke-width="4.2"/><path d="M1222.2 945.87L1219.32 943.25" stroke="#8a8a8a" stroke-width="8.6"/><path d="M1231.89 954.69L1220.06 943.92" stroke="#717171" stroke-width="4.6" stroke-linecap="round"/><path d="M1233 1058.8A17.2 17.2 0 1 1 1250.2 1041.6" fill="none" stroke="#717171" stroke-width="4.2"/><path d="M1233 1058.8A17.2 17.2 0 0 1 1220.28 1030.02" fill="none" stroke="#c4c4c4" stroke-width="4.2"/><path d="M1222.2 1031.77L1219.32 1029.15" stroke="#8a8a8a" stroke-width="8.6"/><path d="M1231.89 1040.59L1220.06 1029.82" stroke="#717171" stroke-width="4.6" stroke-linecap="round"/><path d="M1366.8 886.6A17.2 17.2 0 1 1 1384 869.4" fill="none" stroke="#333333" stroke-width="4.2"/><path d="M1366.8 886.6A17.2 17.2 0 1 1 1370.45 852.59" fill="none" stroke="#70d7ff" stroke-width="4.2"/><path d="M1369.9 855.13L1370.72 851.32" stroke="#8a8a8a" stroke-width="8.6"/><path d="M1367.12 867.93L1370.51 852.3" stroke="#333333" stroke-width="4.6" stroke-linecap="round"/></svg>
<div class="a t" style="left:79px;top:784px;width:200px;height:35px;line-height:35px;font-size:19px;color:#000;-webkit-text-stroke:0.5px;letter-spacing:0.35px;">Analog</div>
<div class="a t" style="left:1331px;top:786px;width:16px;height:34px;line-height:34px;font-size:17px;color:#696969;text-align:center;font-weight:bold;-webkit-text-stroke:0.55px;">A</div>
<div class="a t" style="left:1353px;top:786px;width:16px;height:34px;line-height:34px;font-size:17px;color:#696969;text-align:center;font-weight:bold;-webkit-text-stroke:0.55px;">A</div>
<div class="a t" style="left:1373px;top:786px;width:16px;height:34px;line-height:34px;font-size:17px;color:#696969;text-align:center;font-weight:bold;-webkit-text-stroke:0.55px;">S</div>
<div class="a t" style="left:48px;top:830px;width:60px;height:26.5px;line-height:26.5px;font-size:19px;color:#000;text-align:center;">Osc1</div>
<div class="a t" style="left:114px;top:830px;width:80px;height:27px;line-height:27px;font-size:19px;color:#000;text-align:center;letter-spacing:0.3px;word-spacing:-0.8px;">0.0 dB</div>
<div class="a t" style="left:50px;top:862px;width:70px;height:26px;line-height:26px;font-size:19px;color:#000;">F1/F2</div>
<div class="a t" style="left:114px;top:862px;width:66px;height:27px;line-height:27px;font-size:19px;color:#000;text-align:center;">F1</div>
<div class="a t" style="left:212px;top:821px;width:70px;height:26px;line-height:26px;font-size:19px;color:#000;">Shape</div>
<div class="a t" style="left:290px;top:821px;width:80px;height:26px;line-height:26px;font-size:19px;color:#000;">Octave</div>
<div class="a t" style="left:369.5px;top:821px;width:80px;height:26px;line-height:26px;font-size:19px;color:#000;">Semi</div>
<div class="a t" style="left:465px;top:821px;width:80px;height:26px;line-height:26px;font-size:19px;color:#000;">Detune</div>
<div class="a t" style="left:324.5px;top:874px;width:40px;height:26px;line-height:26px;font-size:19px;color:#000;letter-spacing:0.3px;">0</div>
<div class="a t" style="left:403.7px;top:874px;width:60px;height:26px;line-height:26px;font-size:19px;color:#000;letter-spacing:0.3px;word-spacing:-0.8px;">0 st</div>
<div class="a t" style="left:498.4px;top:874px;width:60px;height:26px;line-height:26px;font-size:19px;color:#000;letter-spacing:0.3px;">1.55</div>
<div class="a t" style="left:48px;top:1086px;width:60px;height:26.5px;line-height:26.5px;font-size:19px;color:#000;text-align:center;">Osc2</div>
<div class="a t" style="left:114px;top:1086px;width:80px;height:27px;line-height:27px;font-size:19px;color:#000;text-align:center;letter-spacing:0.3px;word-spacing:-0.8px;">0.0 dB</div>
<div class="a t" style="left:50px;top:1118px;width:70px;height:26px;line-height:26px;font-size:19px;color:#000;">F1/F2</div>
<div class="a t" style="left:114px;top:1118px;width:66px;height:27px;line-height:27px;font-size:19px;color:#000;text-align:center;">F1</div>
<div class="a t" style="left:212px;top:1077px;width:70px;height:26px;line-height:26px;font-size:19px;color:#000;">Shape</div>
<div class="a t" style="left:290px;top:1077px;width:80px;height:26px;line-height:26px;font-size:19px;color:#000;">Octave</div>
<div class="a t" style="left:369.5px;top:1077px;width:80px;height:26px;line-height:26px;font-size:19px;color:#000;">Semi</div>
<div class="a t" style="left:465px;top:1077px;width:80px;height:26px;line-height:26px;font-size:19px;color:#000;">Detune</div>
<div class="a t" style="left:324.5px;top:1130px;width:40px;height:26px;line-height:26px;font-size:19px;color:#000;letter-spacing:0.3px;">0</div>
<div class="a t" style="left:403.7px;top:1130px;width:60px;height:26px;line-height:26px;font-size:19px;color:#000;letter-spacing:0.3px;word-spacing:-0.8px;">0 st</div>
<div class="a t" style="left:498.4px;top:1130px;width:60px;height:26px;line-height:26px;font-size:19px;color:#000;letter-spacing:0.3px;">0.00</div>
<div class="a t" style="left:568px;top:830px;width:49.5px;height:26.5px;line-height:26.5px;font-size:19px;color:#000;text-align:center;">Fil1</div>
<div class="a t" style="left:630px;top:830px;width:65px;height:26.5px;line-height:26.5px;font-size:19px;color:#000;">LP24</div>
<div class="a t" style="left:567px;top:862px;width:70px;height:26px;line-height:26px;font-size:19px;color:#000;">To F2</div>
<div class="a t" style="left:624px;top:862px;width:77px;height:27px;line-height:27px;font-size:19px;color:#000;text-align:center;letter-spacing:0.3px;word-spacing:-1.2px;">100 %</div>
<div class="a t" style="left:724.5px;top:821px;width:80px;height:26px;line-height:26px;font-size:19px;color:#000;">Freq</div>
<div class="a t" style="left:815px;top:821px;width:80px;height:26px;line-height:26px;font-size:19px;color:#000;">Reso</div>
<div class="a t" style="left:750.5px;top:872.5px;width:70px;height:26px;line-height:26px;font-size:19px;color:#000;letter-spacing:0.3px;">22.0k</div>
<div class="a t" style="left:840.2px;top:872.5px;width:70px;height:26px;line-height:26px;font-size:19px;color:#000;letter-spacing:0.3px;word-spacing:-1.2px;">0 %</div>
<div class="a t" style="left:916px;top:830px;width:60px;height:26.5px;line-height:26.5px;font-size:19px;color:#000;text-align:center;">Amp1</div>
<div class="a t" style="left:998.4px;top:823px;width:60px;height:26px;line-height:26px;font-size:19px;color:#000;">Pan</div>
<div class="a t" style="left:1086.7px;top:823px;width:80px;height:26px;line-height:26px;font-size:19px;color:#000;">Level</div>
<div class="a t" style="left:1032.3px;top:875.5px;width:40px;height:26px;line-height:26px;font-size:19px;color:#000;">C</div>
<div class="a t" style="left:1112.5px;top:875.5px;width:90px;height:26px;line-height:26px;font-size:19px;color:#000;letter-spacing:0.3px;word-spacing:-0.8px;">-18 dB</div>
<div class="a t" style="left:568px;top:1086px;width:49.5px;height:26.5px;line-height:26.5px;font-size:19px;color:#000;text-align:center;">Fil2</div>
<div class="a t" style="left:630px;top:1086px;width:65px;height:26.5px;line-height:26.5px;font-size:19px;color:#000;">LP12</div>
<div class="a t" style="left:624px;top:1118px;width:77px;height:26.5px;line-height:26.5px;font-size:19px;color:#000;text-align:center;">Slave</div>
<div class="a t" style="left:724.5px;top:1077px;width:80px;height:26px;line-height:26px;font-size:19px;color:#000;">Freq</div>
<div class="a t" style="left:815px;top:1077px;width:80px;height:26px;line-height:26px;font-size:19px;color:#000;">Reso</div>
<div class="a t" style="left:750.5px;top:1128.5px;width:70px;height:26px;line-height:26px;font-size:19px;color:#000;letter-spacing:0.3px;">22.0k</div>
<div class="a t" style="left:840.2px;top:1128.5px;width:70px;height:26px;line-height:26px;font-size:19px;color:#000;letter-spacing:0.3px;word-spacing:-1.2px;">0 %</div>
<div class="a t" style="left:916px;top:1086px;width:60px;height:26.5px;line-height:26.5px;font-size:19px;color:#000;text-align:center;">Amp2</div>
<div class="a t" style="left:998.4px;top:1079px;width:60px;height:26px;line-height:26px;font-size:19px;color:#000;">Pan</div>
<div class="a t" style="left:1086.7px;top:1079px;width:80px;height:26px;line-height:26px;font-size:19px;color:#000;">Level</div>
<div class="a t" style="left:1032.3px;top:1131.5px;width:40px;height:26px;line-height:26px;font-size:19px;color:#000;">C</div>
<div class="a t" style="left:1112.5px;top:1131.5px;width:90px;height:26px;line-height:26px;font-size:19px;color:#000;letter-spacing:0.3px;word-spacing:-0.8px;">-18 dB</div>
<div class="a t" style="left:48px;top:914px;width:60px;height:26.5px;line-height:26.5px;font-size:19px;color:#000;text-align:center;">Noise</div>
<div class="a t" style="left:114px;top:914px;width:80px;height:26.5px;line-height:26.5px;font-size:19px;color:#000;text-align:center;letter-spacing:0.3px;word-spacing:-0.8px;">0.0 dB</div>
<div class="a t" style="left:50px;top:946px;width:70px;height:26px;line-height:26px;font-size:19px;color:#000;">F1/F2</div>
<div class="a t" style="left:114px;top:946px;width:66px;height:26.5px;line-height:26.5px;font-size:19px;color:#000;text-align:center;">F1</div>
<div class="a t" style="left:82.3px;top:988px;width:80px;height:26px;line-height:26px;font-size:19px;color:#000;">Color</div>
<div class="a t" style="left:108.7px;top:1040px;width:90px;height:26px;line-height:26px;font-size:19px;color:#000;letter-spacing:0.3px;word-spacing:-0.8px;">682 Hz</div>
<div class="a t" style="left:221px;top:976px;width:12px;height:26px;line-height:26px;font-size:19px;color:#8c8c8c;letter-spacing:0.3px;">0</div>
<div class="a t" style="left:556.8px;top:976px;width:12px;height:26px;line-height:26px;font-size:19px;color:#8c8c8c;letter-spacing:0.3px;">0</div>
<div class="a t" style="left:662.2px;top:908px;width:200px;height:26px;line-height:26px;font-size:19px;color:#8c8c8c;">Pitch Env Initial</div>
<div class="a t" style="left:838.9px;top:908px;width:80px;height:26px;line-height:26px;font-size:19px;color:#8c8c8c;">Time</div>
<div class="a t" style="left:666.3px;top:934px;width:80px;height:26px;line-height:26px;font-size:19px;color:#70d7ff;letter-spacing:0.3px;word-spacing:-1.2px;-webkit-text-stroke:0.55px;">0 %</div>
<div class="a t" style="left:842.7px;top:934px;width:80px;height:26px;line-height:26px;font-size:19px;color:#70d7ff;letter-spacing:0.3px;word-spacing:-1.2px;-webkit-text-stroke:0.55px;">50 %</div>
<div class="a t" style="left:662.2px;top:986.5px;width:120px;height:26px;line-height:26px;font-size:19px;color:#8c8c8c;">Pitch Mod</div>
<div class="a t" style="left:838.9px;top:986.5px;width:120px;height:26px;line-height:26px;font-size:19px;color:#8c8c8c;">Pulse Width</div>
<div class="a t" style="left:1014px;top:986.5px;width:120px;height:26px;line-height:26px;font-size:19px;color:#8c8c8c;">Sub/Sync</div>
<div class="a t" style="left:662.2px;top:1012px;width:80px;height:26px;line-height:26px;font-size:19px;color:#8c8c8c;">LFO1</div>
<div class="a t" style="left:750.5px;top:1012px;width:80px;height:26px;line-height:26px;font-size:19px;color:#8c8c8c;">Key</div>
<div class="a t" style="left:838.9px;top:1012px;width:80px;height:26px;line-height:26px;font-size:19px;color:#8c8c8c;">Width</div>
<div class="a t" style="left:926.4px;top:1012px;width:80px;height:26px;line-height:26px;font-size:19px;color:#8c8c8c;">LFO1</div>
<div class="a t" style="left:1014px;top:1012px;width:80px;height:26px;line-height:26px;font-size:19px;color:#8c8c8c;">Mode</div>
<div class="a t" style="left:1102.4px;top:1012px;width:80px;height:26px;line-height:26px;font-size:19px;color:#8c8c8c;">Level</div>
<div class="a t" style="left:666.3px;top:1038px;width:80px;height:26px;line-height:26px;font-size:19px;color:#8c8c8c;letter-spacing:0.3px;">0.00</div>
<div class="a t" style="left:754.6px;top:1038px;width:80px;height:26px;line-height:26px;font-size:19px;color:#ffb532;letter-spacing:0.3px;word-spacing:-1.2px;-webkit-text-stroke:0.55px;">100 %</div>
<div class="a t" style="left:842.7px;top:1038px;width:80px;height:26px;line-height:26px;font-size:19px;color:#8c8c8c;letter-spacing:0.3px;word-spacing:-1.2px;">50 %</div>
<div class="a t" style="left:930.4px;top:1038px;width:80px;height:26px;line-height:26px;font-size:19px;color:#8c8c8c;letter-spacing:0.3px;">0.00</div>
<div class="a t" style="left:1018px;top:1038px;width:80px;height:26px;line-height:26px;font-size:19px;color:#ffb532;-webkit-text-stroke:0.55px;">Sub</div>
<div class="a t" style="left:1106.3px;top:1038px;width:80px;height:26px;line-height:26px;font-size:19px;color:#ffb532;letter-spacing:0.3px;word-spacing:-1.2px;-webkit-text-stroke:0.55px;">0 %</div>
<div class="a t" style="left:1202px;top:830px;width:58px;height:26.5px;line-height:26.5px;font-size:19px;color:#000;text-align:center;">LFO1</div>
<div class="a t" style="left:1266px;top:830px;width:34px;height:26.5px;line-height:26.5px;font-size:19px;color:#8c8c8c;text-align:center;">Hz</div>
<div class="a t" style="left:1266px;top:862px;width:34px;height:26.5px;line-height:26.5px;font-size:20px;color:#777;text-align:center;">♪</div>
<div class="a t" style="left:1202px;top:1086px;width:58px;height:26.5px;line-height:26.5px;font-size:19px;color:#000;text-align:center;">LFO2</div>
<div class="a t" style="left:1266px;top:1086px;width:34px;height:26.5px;line-height:26.5px;font-size:19px;color:#8c8c8c;text-align:center;">Hz</div>
<div class="a t" style="left:1266px;top:1118px;width:34px;height:26.5px;line-height:26.5px;font-size:20px;color:#777;text-align:center;">♪</div>
<div class="a t" style="left:1214.6px;top:906.5px;width:60px;height:26px;line-height:26px;font-size:19px;color:#000;">Rate</div>
<div class="a t" style="left:1214.6px;top:992.5px;width:60px;height:26px;line-height:26px;font-size:19px;color:#000;">Rate</div>
<div class="a t" style="left:1240.7px;top:958px;width:70px;height:26px;line-height:26px;font-size:19px;color:#000;letter-spacing:0.3px;word-spacing:-0.8px;">0.9 Hz</div>
<div class="a t" style="left:1240.7px;top:1044.5px;width:70px;height:26px;line-height:26px;font-size:19px;color:#000;letter-spacing:0.3px;word-spacing:-0.8px;">0.9 Hz</div>
<div class="a t" style="left:1313.5px;top:820.5px;width:134px;height:26px;line-height:26px;font-size:19px;color:#000;text-align:center;">Volume</div>
<div class="a t" style="left:1374.3px;top:872px;width:80px;height:26px;line-height:26px;font-size:19px;color:#000;letter-spacing:0.3px;word-spacing:-0.8px;">0.0 dB</div>
<div class="a t" style="left:1322px;top:914px;width:42px;height:26.5px;line-height:26.5px;font-size:19px;color:#000;text-align:center;">Vib</div>
<div class="a t" style="left:1370px;top:914px;width:78px;height:26.5px;line-height:26.5px;font-size:19px;color:#000;text-align:center;letter-spacing:0.3px;word-spacing:-1.2px;">0 %</div>
<div class="a t" style="left:1322.8px;top:948.5px;width:60px;height:26px;line-height:26px;font-size:19px;color:#000;">Rate</div>
<div class="a t" style="left:1370px;top:946px;width:78px;height:26.5px;line-height:26.5px;font-size:19px;color:#000;text-align:center;letter-spacing:0.3px;word-spacing:-0.8px;">5.1 Hz</div>
<div class="a t" style="left:1371px;top:990.5px;width:80px;height:26px;line-height:26px;font-size:19px;color:#000;">Detune</div>
<div class="a t" style="left:1322px;top:1016px;width:42px;height:26.5px;line-height:26.5px;font-size:19px;color:#000;text-align:center;">Uni</div>
<div class="a t" style="left:1370px;top:1016px;width:78px;height:26.5px;line-height:26.5px;font-size:19px;color:#000;text-align:center;letter-spacing:0.3px;">0.00</div>
<div class="a t" style="left:1371px;top:1060.5px;width:80px;height:26px;line-height:26px;font-size:19px;color:#000;">Time</div>
<div class="a t" style="left:1322px;top:1086px;width:42px;height:26.5px;line-height:26.5px;font-size:19px;color:#000;text-align:center;">Gli</div>
<div class="a t" style="left:1370px;top:1086px;width:78px;height:26.5px;line-height:26.5px;font-size:19px;color:#000;text-align:center;letter-spacing:0.3px;word-spacing:-1.2px;">50 %</div>
<div class="a t" style="left:1370px;top:1118px;width:78px;height:26.5px;line-height:26.5px;font-size:19px;color:#6e6e6e;text-align:center;">Legato</div>
<div class="a" style="left:1464px;top:932px;width:4px;height:80px;background:#282828;"></div>
<div class="a" style="left:1470px;top:932px;width:4px;height:80px;background:#282828;"></div>
<div class="a" style="left:1464px;top:940px;width:4px;height:1.6px;background:#9c9c9c;"></div>
<div class="a" style="left:1470px;top:940px;width:4px;height:1.6px;background:#9c9c9c;"></div>
<div class="a" style="left:1480px;top:784px;width:210px;height:376px;background:#8a8a8a;border-radius:8px;"></div>
<div class="a" style="left:1480px;top:784px;width:210px;height:34px;background:#a9a9a9;border-radius:8px 8px 0 0;"></div>
<div class="a" style="left:1490px;top:824px;width:190px;height:108px;background:#2a2a2a;border-radius:8px;"></div>
<div class="a" style="left:1490px;top:1086px;width:190px;height:60px;background:#2a2a2a;border-radius:8px;"></div>
<div class="a" style="left:1496px;top:836px;width:140px;height:22px;background:transparent;border:2px solid #ffb532;"></div>
<div class="a" style="left:1558.5px;top:869px;width:77.5px;height:20.5px;background:transparent;border:2px solid #4e4e4e;"></div>
<div class="a" style="left:1558.5px;top:892px;width:77.5px;height:21px;background:transparent;border:2px solid #4e4e4e;"></div>
<div class="a" style="left:1558.5px;top:1104.5px;width:77.5px;height:21px;background:transparent;border:2px solid #4e4e4e;"></div>
<svg class="a" style="left:0;top:0" width="2796" height="1250" viewBox="0 0 2796 1250"><circle cx="1499" cy="801" r="12" fill="#ffb532" stroke="#5a5a5a" stroke-width="1.8"/><circle cx="1607" cy="801" r="11.8" fill="#a9a9a9" stroke="#5a5a5a" stroke-width="1.6"/><rect x="1601" y="796.5" width="12" height="9" fill="none" stroke="#000" stroke-width="2"/><path d="M1603 796.5v-3M1611 796.5v-3M1603 805.5v3M1611 805.5v3" stroke="#000" stroke-width="2"/><circle cx="1639" cy="801" r="11.8" fill="#a9a9a9" stroke="#5a5a5a" stroke-width="1.6"/><path d="M1633 800.5A6 6 0 0 1 1643.9 797.6" fill="none" stroke="#000" stroke-width="2.1"/><path d="M1645 801.5A6 6 0 0 1 1634.1 804.4" fill="none" stroke="#000" stroke-width="2.1"/><path d="M1629.3 800h7.4l-3.7 4.4z" fill="#000"/><path d="M1641.3 802h7.4l-3.7-4.4z" fill="#000"/><circle cx="1671" cy="801" r="11.8" fill="#a9a9a9" stroke="#5a5a5a" stroke-width="1.6"/><path d="M1664.5 794.5h10l3 3v10h-13z" fill="#000"/><rect x="1667.5" y="795.5" width="6" height="4" fill="#a9a9a9"/><circle cx="1661" cy="848.7" r="11" fill="#ffb532" stroke="#5a5a5a" stroke-width="1.5"/><path d="M1571.95 1032.79A23.6 23.6 0 1 1 1599 1031.85" fill="none" stroke="#c8c8c8" stroke-width="4.6"/><path d="M1571.95 1032.79A23.6 23.6 0 1 1 1604.98 1025.24" fill="none" stroke="#c8c8c8" stroke-width="4.6"/><path d="M1602.58 1023.79L1606.26 1026.02" stroke="#8a8a8a" stroke-width="9"/><path d="M1587.36 1014.56L1605.4 1025.5" stroke="#717171" stroke-width="5" stroke-linecap="round"/></svg>
<div class="a t" style="left:1521px;top:784px;width:100px;height:35px;line-height:35px;font-size:19px;color:#000;-webkit-text-stroke:0.5px;letter-spacing:1px;">Auto...</div>
<div class="a t" style="-webkit-text-stroke:0.55px;left:1496px;top:836px;width:144px;height:26.5px;line-height:26.5px;font-size:19px;color:#ffb532;text-align:center;">OSC1 Detune</div>
<div class="a t" style="left:1650px;top:836px;width:22px;height:26px;line-height:26px;font-size:17px;color:#000;text-align:center;-webkit-text-stroke:0.55px;">X</div>
<div class="a t" style="left:1496.7px;top:870px;width:60px;height:26px;line-height:26px;font-size:19px;color:#8c8c8c;">Min</div>
<div class="a t" style="left:1496.7px;top:893px;width:60px;height:26px;line-height:26px;font-size:19px;color:#8c8c8c;">Max</div>
<div class="a t" style="left:1558.5px;top:869px;width:77px;height:25px;line-height:25px;font-size:19px;color:#ffb532;text-align:right;letter-spacing:0.3px;word-spacing:-1.2px;">0 %</div>
<div class="a t" style="left:1558.5px;top:892.5px;width:77px;height:25px;line-height:25px;font-size:19px;color:#ffb532;text-align:right;letter-spacing:0.3px;word-spacing:-1.2px;">100 %</div>
<div class="a t" style="left:1484.8px;top:960.5px;width:200px;height:26px;line-height:26px;font-size:19px;color:#000;text-align:center;">Map me</div>
<div class="a t" style="left:1484.8px;top:1034px;width:200px;height:26px;line-height:26px;font-size:19px;color:#000;text-align:center;letter-spacing:0.3px;">115</div>
<div class="a t" style="left:1496.7px;top:1104px;width:60px;height:26px;line-height:26px;font-size:19px;color:#8c8c8c;">Rate</div>
<div class="a t" style="left:1558.5px;top:1104.5px;width:77px;height:26px;line-height:26px;font-size:19px;color:#ffb532;text-align:right;letter-spacing:0.3px;">20</div>
<div class="a t" style="left:1646.5px;top:1104px;width:40px;height:26px;line-height:26px;font-size:19px;color:#8c8c8c;">ms</div>
<div class="a" style="left:1696px;top:932px;width:4px;height:80px;background:#282828;"></div>
<div class="a" style="left:1702px;top:932px;width:4px;height:80px;background:#282828;"></div>
<div class="a" style="left:1696px;top:940px;width:4px;height:1.6px;background:#9c9c9c;"></div>
<div class="a" style="left:1702px;top:940px;width:4px;height:1.6px;background:#9c9c9c;"></div>
<div class="a" style="left:1712px;top:784px;width:424px;height:376px;background:#8a8a8a;border-radius:8px;"></div>
<div class="a" style="left:1712px;top:784px;width:424px;height:34px;background:#a9a9a9;border-radius:8px 8px 0 0;"></div>
<div class="a" style="left:1720px;top:826px;width:408px;height:209.5px;background:#2a2a2a;border-radius:8px;"></div>
<div class="a" style="left:1728px;top:834px;width:144px;height:26px;background:#ffb532;"></div>
<div class="a" style="left:1816px;top:1076px;width:34px;height:22px;background:#ffb532;border:2px solid #5a5a5a;"></div>
<div class="a" style="left:1816px;top:1108px;width:34px;height:22px;background:#a9a9a9;border:2px solid #5a5a5a;"></div>
<div class="a" style="left:2042px;top:1078px;width:81.6px;height:22px;background:#c8c8c8;border:2px solid #5a5a5a;"></div>
<div class="a" style="left:2042px;top:1112px;width:49.5px;height:22px;background:#a9a9a9;border:2px solid #5a5a5a;"></div>
<svg class="a" style="left:0;top:0" width="2796" height="1250" viewBox="0 0 2796 1250"><circle cx="1731" cy="801" r="12" fill="#ffb532" stroke="#5a5a5a" stroke-width="1.8"/><circle cx="2052.6" cy="801" r="11.8" fill="#a9a9a9" stroke="#5a5a5a" stroke-width="1.6"/><rect x="2046.6" y="796.5" width="12" height="9" fill="none" stroke="#000" stroke-width="2"/><path d="M2048.6 796.5v-3M2056.6 796.5v-3M2048.6 805.5v3M2056.6 805.5v3" stroke="#000" stroke-width="2"/><circle cx="2084.8" cy="801" r="11.8" fill="#a9a9a9" stroke="#5a5a5a" stroke-width="1.6"/><path d="M2078.8 800.5A6 6 0 0 1 2089.7 797.6" fill="none" stroke="#000" stroke-width="2.1"/><path d="M2090.8 801.5A6 6 0 0 1 2079.9 804.4" fill="none" stroke="#000" stroke-width="2.1"/><path d="M2075.1 800h7.4l-3.7 4.4z" fill="#000"/><path d="M2087.1 802h7.4l-3.7-4.4z" fill="#000"/><circle cx="2117.2" cy="801" r="11.8" fill="#a9a9a9" stroke="#5a5a5a" stroke-width="1.6"/><path d="M2110.7 794.5h10l3 3v10h-13z" fill="#000"/><rect x="2113.7" y="795.5" width="6" height="4" fill="#a9a9a9"/><circle cx="1891" cy="846.7" r="12" fill="none" stroke="#ffb532" stroke-width="1.6"/><path d="M1886 841.7l10 10M1896 841.7l-10 10" stroke="#ffb532" stroke-width="1.8"/><rect x="2095" y="834.7" width="24" height="24" fill="none" stroke="#ffb532" stroke-width="2"/><path d="M2100 840.5h14M2100 844.7h14M2100 848.9h14M2100 853.1h14" stroke="#ffb532" stroke-width="1.6"/><path d="M1720 935.7H2128" stroke="#4a4a4a" stroke-width="1.2"/><polyline points="1727.4,977.2 1734.6,995.4 1777.6,875.9 1821,995 1864.6,876.5 1907.6,995 1950.9,877.2 1994,995 2037.4,876.5 2080.7,995.4 2120.4,887.4" fill="none" stroke="#ffb532" stroke-width="1.7"/><path d="M1827 1011h13l-6.5 9z" fill="#ffb532"/><path d="M1752.8 1127.78A24 24 0 1 1 1776.8 1127.78" fill="none" stroke="#333333" stroke-width="4.5"/><path d="M1752.8 1127.78A24 24 0 0 1 1741.86 1099.94" fill="none" stroke="#70d7ff" stroke-width="4.5"/><path d="M1744.49 1100.75L1740.48 1099.52" stroke="#8a8a8a" stroke-width="8.9"/><path d="M1763.37 1106.56L1741.43 1099.81" stroke="#333333" stroke-width="4.9" stroke-linecap="round"/><path d="M1888.9 1127.78A24 24 0 1 1 1912.9 1127.78" fill="none" stroke="#333333" stroke-width="4.5"/><path d="M1888.9 1127.78A24 24 0 1 1 1913.44 1127.46" fill="none" stroke="#70d7ff" stroke-width="4.5"/><path d="M1912 1125.12L1914.2 1128.7" stroke="#8a8a8a" stroke-width="8.9"/><path d="M1901.68 1108.28L1913.68 1127.85" stroke="#333333" stroke-width="4.9" stroke-linecap="round"/><path d="M1979 1127.78A24 24 0 0 1 1986.42 1083.44" fill="none" stroke="#333333" stroke-width="4.5"/><path d="M1995.58 1083.44A24 24 0 0 1 2003 1127.78" fill="none" stroke="#333333" stroke-width="4.5"/><path d="M1991 1106V1083" stroke="#333333" stroke-width="4.8" stroke-linecap="round"/><path d="M1980.4 1068.7h21.4l-10.7 10.5z" fill="#333333"/><path d="M1798 1105h12" stroke="#777" stroke-width="1.4"/><path d="M2110 1091l15-8v16z" fill="#a9a9a9"/><circle cx="2114.3" cy="1125" r="11.3" fill="#b2b2b2" stroke="#5a5a5a" stroke-width="1.6"/></svg>
<div class="a t" style="left:1753px;top:784px;width:100px;height:35px;line-height:35px;font-size:18px;color:#000;-webkit-text-stroke:0.5px;letter-spacing:-0.4px;">LFO</div>
<div class="a t" style="left:1728px;top:834px;width:144px;height:27px;line-height:27px;font-size:19px;color:#3a2a0a;text-align:center;">Map me</div>
<div class="a t" style="left:1914px;top:834px;width:60px;height:27px;line-height:27px;font-size:19px;color:#ffb532;letter-spacing:0.3px;word-spacing:-1.2px;-webkit-text-stroke:0.55px;">0 %</div>
<div class="a t" style="left:1980px;top:834px;width:80px;height:27px;line-height:27px;font-size:19px;color:#ffb532;letter-spacing:0.3px;word-spacing:-1.2px;-webkit-text-stroke:0.55px;">100 %</div>
<div class="a t" style="left:1734.6px;top:1002px;width:100px;height:27px;line-height:27px;font-size:19px;color:#ffb532;-webkit-text-stroke:0.55px;letter-spacing:-0.4px;">Triangle</div>
<div class="a t" style="left:1862.4px;top:1002px;width:80px;height:27px;line-height:27px;font-size:19px;color:#8c8c8c;">Jitter</div>
<div class="a t" style="left:1920.4px;top:1002px;width:60px;height:27px;line-height:27px;font-size:19px;color:#ffb532;letter-spacing:0.3px;word-spacing:-1.2px;-webkit-text-stroke:0.55px;">0 %</div>
<div class="a t" style="left:1988.3px;top:1002px;width:80px;height:27px;line-height:27px;font-size:19px;color:#8c8c8c;">Smooth</div>
<div class="a t" style="left:2062.2px;top:1002px;width:60px;height:27px;line-height:27px;font-size:19px;color:#ffb532;letter-spacing:0.3px;word-spacing:-1.2px;-webkit-text-stroke:0.55px;">0 %</div>
<div class="a t" style="left:1715px;top:1054.4px;width:100px;height:26px;line-height:26px;font-size:19px;color:#000;text-align:center;">Rate</div>
<div class="a t" style="left:1851px;top:1054.4px;width:100px;height:26px;line-height:26px;font-size:19px;color:#000;text-align:center;">Depth</div>
<div class="a t" style="left:1941px;top:1042.4px;width:100px;height:26px;line-height:26px;font-size:19px;color:#000;text-align:center;">Offset</div>
<div class="a t" style="left:1705px;top:1128.3px;width:120px;height:26px;line-height:26px;font-size:19px;color:#000;text-align:center;letter-spacing:0.3px;word-spacing:-0.8px;">1.00 Hz</div>
<div class="a t" style="left:1841px;top:1128.3px;width:120px;height:26px;line-height:26px;font-size:19px;color:#000;text-align:center;letter-spacing:0.3px;word-spacing:-1.2px;">100 %</div>
<div class="a t" style="left:1931px;top:1128.3px;width:120px;height:26px;line-height:26px;font-size:19px;color:#000;text-align:center;letter-spacing:0.3px;word-spacing:-1.2px;">0 %</div>
<div class="a t" style="left:1816px;top:1076px;width:38px;height:26.5px;line-height:26.5px;font-size:16px;color:#000;text-align:center;">Hz</div>
<div class="a t" style="left:1816px;top:1108px;width:38px;height:26.5px;line-height:26.5px;font-size:18px;color:#000;text-align:center;">♪</div>
<div class="a t" style="left:2042.6px;top:1052px;width:80px;height:26px;line-height:26px;font-size:19px;color:#000;">Phase</div>
<div class="a t" style="left:2042px;top:1078px;width:72px;height:27px;line-height:27px;font-size:19px;color:#000;text-align:center;letter-spacing:0.3px;word-spacing:-1.2px;">0 %</div>
<div class="a t" style="left:2042px;top:1112px;width:53.5px;height:26.5px;line-height:26.5px;font-size:19px;color:#000;text-align:center;">Hold</div>
<div class="a t" style="left:2103px;top:1112px;width:22.6px;height:26.4px;line-height:26.4px;font-size:19px;color:#000;text-align:center;">R</div>
<div class="a" style="left:2142px;top:932px;width:4px;height:80px;background:#282828;"></div>
<div class="a" style="left:2148px;top:932px;width:4px;height:80px;background:#282828;"></div>
<div class="a" style="left:2142px;top:940px;width:4px;height:1.6px;background:#9c9c9c;"></div>
<div class="a" style="left:2148px;top:940px;width:4px;height:1.6px;background:#9c9c9c;"></div>
<svg class="a" style="left:0;top:0" width="2796" height="1250" viewBox="0 0 2796 1250"><circle cx="1735.9" cy="1010.6" r="4.6" fill="#ff5a5a" stroke="#1a1a1a" stroke-width="1.5"/></svg>
<div class="a" style="left:2158px;top:784px;width:614px;height:375.5px;background:#8a8a8a;"></div>
<div class="a" style="left:0px;top:1228px;width:2796px;height:16px;background:#6a6a6a;"></div>
<div class="a" style="left:-10px;top:1184px;width:2003px;height:44px;background:#5c5c5c;border-radius:8px;"></div>
<div class="a" style="left:0px;top:1190px;width:1987px;height:32px;background:#868686;"></div>
<div class="a" style="left:2010.5px;top:1184px;width:410.5px;height:44px;background:#5c5c5c;border-radius:8px;"></div>
<div class="a" style="left:2016.5px;top:1190px;width:398.5px;height:32px;background:#868686;"></div>
<div class="a" style="left:2438px;top:1160px;width:288px;height:68px;background:#5b5b5b;border-radius:0 0 8px 8px;"></div>
<div class="a" style="left:2430px;top:1167px;width:8px;height:8px;background:radial-gradient(circle at 0 100%,#6f6f6f 7.5px,#5b5b5b 8.5px);"></div>
<div class="a" style="left:2726px;top:1167px;width:8px;height:8px;background:radial-gradient(circle at 100% 100%,#6f6f6f 7.5px,#5b5b5b 8.5px);"></div>
<div class="a" style="left:2534px;top:1190px;width:122.5px;height:32px;background:#a6a6a6;"></div>
<div class="a" style="left:2549px;top:1200px;width:84px;height:14px;background:#2a2a2a;"></div>
<div class="a" style="left:2535px;top:1194px;width:4.5px;height:2.5px;background:#ffb532;"></div>
<div class="a" style="left:2541px;top:1194px;width:6px;height:2.5px;background:#70d7ff;"></div>
<div class="a" style="left:2535px;top:1216.5px;width:4.5px;height:2.5px;background:#ffb532;"></div>
<div class="a" style="left:2541px;top:1216.5px;width:6px;height:2.5px;background:#70d7ff;"></div>
<div class="a" style="left:2580px;top:1194px;width:4px;height:2.5px;background:#ffb532;"></div>
<div class="a" style="left:2610px;top:1194px;width:4.5px;height:2.5px;background:#ffb532;"></div>
<div class="a" style="left:2585px;top:1197px;width:6px;height:2px;background:#70d7ff;"></div>
<div class="a" style="left:2535px;top:1191px;width:2px;height:2px;background:#ffb532;"></div>
<div class="a" style="left:2579px;top:1192px;width:29px;height:7.5px;background:rgba(0,0,0,.12);"></div>
<div class="a" style="left:2609px;top:1192px;width:24px;height:7.5px;background:rgba(0,0,0,.12);"></div>
<div class="a" style="left:2634px;top:1192px;width:9px;height:29px;background:rgba(0,0,0,.12);"></div>
<div class="a" style="left:2644px;top:1192px;width:11px;height:29px;background:rgba(0,0,0,.12);"></div>
<div class="a" style="left:2535px;top:1201px;width:13px;height:12px;background:rgba(0,0,0,.12);"></div>
<div class="a" style="left:2535px;top:1215px;width:43px;height:6.5px;background:rgba(0,0,0,.12);"></div>
<div class="a" style="left:2579px;top:1215px;width:29px;height:6.5px;background:rgba(0,0,0,.12);"></div>
<div class="a" style="left:2609px;top:1215px;width:24px;height:6.5px;background:rgba(0,0,0,.12);"></div>
<div class="a" style="left:2551px;top:1207px;width:28px;height:1px;background:#70d7ff;"></div>
<div class="a" style="left:2597px;top:1212px;width:5px;height:1.5px;background:#ffb532;"></div>
<div class="a" style="left:2620px;top:1212px;width:6px;height:1.5px;background:#ffb532;"></div>
<div class="a" style="left:2589px;top:1203px;width:3px;height:1.5px;background:#70d7ff;"></div>
<div class="a" style="left:2604px;top:1203px;width:3px;height:1.5px;background:#70d7ff;"></div>
<div class="a" style="left:2660px;top:1190px;width:18px;height:32px;background:#8e8e8e;"></div>
<div class="a" style="left:2682px;top:1190px;width:36px;height:32px;background:#8e8e8e;"></div>
<div class="a" style="left:2742px;top:1186px;width:38px;height:38px;background:#5b5b5b;border-radius:50%;"></div>
<svg class="a" style="left:0;top:0" width="2796" height="1250" viewBox="0 0 2796 1250"><path d="M2750 1213l11-19l11 19z" fill="#777" stroke="#777" stroke-width="3" stroke-linejoin="round"/></svg>
<div class="a t" style="left:2158px;top:958.5px;width:614px;height:26px;line-height:26px;font-size:19px;color:#1c1c1c;text-align:center;letter-spacing:0.5px;">Drop Audio Effects Here</div>
<div class="a t" style="left:2446.8px;top:1193px;width:100px;height:28px;line-height:28px;font-size:19px;color:#000;-webkit-text-stroke:0.5px;letter-spacing:0.35px;">1-Analog</div>
<div class="a t" style="left:2661px;top:1197px;width:17px;height:28px;line-height:28px;font-size:17px;color:#000;overflow:hidden;">Au</div>
<div class="a t" style="left:2682px;top:1197px;width:36px;height:28px;line-height:28px;font-size:17px;color:#000;text-align:center;">LFO</div>
<div class="a" style="left:0px;top:1244px;width:2796px;height:6px;background:linear-gradient(90deg,#6b7893 0%,#7a839c 25%,#9a9a98 45%,#b0a8a0 58%,#b59873 63.5%,#a8733c 65.5%,#b07a40 100%);"></div>
<div class="a" style="left:0px;top:1244px;width:2796px;height:1.6px;background:#181818;"></div>
<div class="a" style="left:2784px;top:1232px;width:12px;height:12px;background:radial-gradient(circle at 0 0,rgba(0,0,0,0) 11px,#2a2a2a 11.5px,#a8733c 12.5px);"></div>
</body></html>
